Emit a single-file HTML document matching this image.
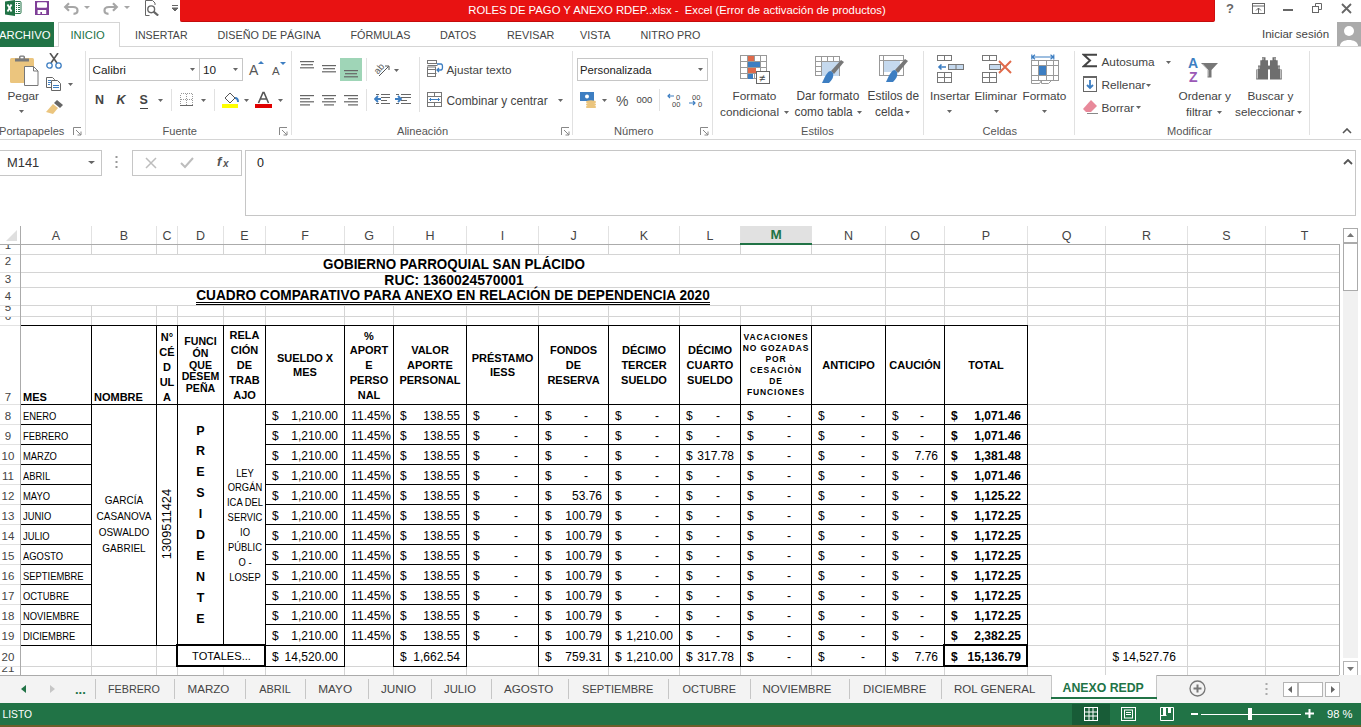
<!DOCTYPE html><html><head><meta charset="utf-8"><style>
html,body{margin:0;padding:0;} body{width:1361px;height:727px;overflow:hidden;position:relative;background:#fff;font-family:"Liberation Sans", sans-serif;} div{box-sizing:border-box;} svg{display:block;}
</style></head><body>
<div style="position:absolute;left:180px;top:0px;width:1035px;height:22px;background:#e81212;border-radius:0 0 2px 2px;border-bottom:1px solid #c40c0c;border-right:1px solid #d00e0e;"></div>
<div style="position:absolute;left:327.0px;top:-0.1999999999999993px;width:700px;text-align:center;line-height:20px;height:20px;font-size:11.3px;color:#fff;font-weight:normal;white-space:pre;">ROLES DE PAGO Y ANEXO RDEP..xlsx -  Excel (Error de activación de productos)</div>
<svg style="position:absolute;left:5px;top:0px;" width="17" height="16" viewBox="0 0 17 16"><rect x="9.5" y="1.5" width="6.5" height="12" rx="1" fill="#fff" stroke="#217346"/><path d="M11 3.5h1M13 3.5h2M11 5.5h1M13 5.5h2M11 7.5h1M13 7.5h2M11 9.5h1M13 9.5h2M11 11.5h1M13 11.5h2" stroke="#217346"/><path d="M0 1.5L10 0v16L0 14.5z" fill="#217346"/><path d="M2.5 4.5l4 7M6.5 4.5l-4 7" stroke="#fff" stroke-width="1.8"/></svg>
<svg style="position:absolute;left:35px;top:1px;" width="14" height="14" viewBox="0 0 14 14"><rect x="0" y="0" width="14" height="14" fill="#7f3f98"/><rect x="2" y="1.3" width="10" height="5.5" rx="1" fill="#fff"/><rect x="2.6" y="9" width="8.6" height="4" fill="#fff"/><rect x="5.4" y="11" width="1.6" height="2" fill="#7f3f98"/></svg>
<svg style="position:absolute;left:63px;top:1px;" width="16" height="14" viewBox="0 0 16 14"><path d="M2.5 6H10C13.2 6 14.5 7.8 14.5 9.5C14.5 11.5 13 12.8 10.5 12.8" fill="none" stroke="#a6a6a6" stroke-width="2.2"/><path d="M6 2.2L2.2 6 6 9.8" fill="none" stroke="#a6a6a6" stroke-width="2.2"/></svg>
<svg style="position:absolute;left:84px;top:6px;" width="6" height="3" viewBox="0 0 6 3"><path d="M0 0h6l-3 3z" fill="#a6a6a6"/></svg>
<svg style="position:absolute;left:103px;top:1px;" width="16" height="14" viewBox="0 0 16 14"><path d="M13.5 6H6C2.8 6 1.5 7.8 1.5 9.5C1.5 11.5 3 12.8 5.5 12.8" fill="none" stroke="#a6a6a6" stroke-width="2.2"/><path d="M10 2.2L13.8 6 10 9.8" fill="none" stroke="#a6a6a6" stroke-width="2.2"/></svg>
<svg style="position:absolute;left:124px;top:6px;" width="6" height="3" viewBox="0 0 6 3"><path d="M0 0h6l-3 3z" fill="#a6a6a6"/></svg>
<svg style="position:absolute;left:145px;top:0px;" width="15" height="16" viewBox="0 0 15 16"><path d="M0.5 15.5V0.5h7l2.5 2.5v2" fill="none" stroke="#666"/><circle cx="6.2" cy="9.3" r="3.4" fill="#fff" stroke="#666" stroke-width="1.4"/><path d="M8.6 11.7l4.6 3.8" stroke="#666" stroke-width="2.2"/><path d="M0.5 15.5h4" stroke="#666"/></svg>
<svg style="position:absolute;left:172px;top:5px;" width="6" height="7" viewBox="0 0 6 7"><path d="M0 0.5h6M0 3h6l-3 3z" stroke="#666" fill="#666" stroke-width="1"/></svg>
<div style="position:absolute;left:1226px;top:-1.5px;line-height:20px;height:20px;font-size:13px;color:#666;font-weight:bold;white-space:pre;">?</div>
<svg style="position:absolute;left:1252px;top:3px;" width="13" height="11" viewBox="0 0 13 11"><rect x="0.5" y="0.5" width="12" height="10" fill="none" stroke="#666"/><path d="M0.5 3h12" stroke="#666"/><path d="M6.5 10V5M4 7.5l2.5-2.5 2.5 2.5" fill="none" stroke="#666"/></svg>
<svg style="position:absolute;left:1283px;top:9px;" width="10" height="2" viewBox="0 0 10 2"><rect width="10" height="2" fill="#666"/></svg>
<svg style="position:absolute;left:1312px;top:3px;" width="10" height="10" viewBox="0 0 10 10"><rect x="0.5" y="3.5" width="6" height="6" fill="none" stroke="#666"/><path d="M3.5 3.5V0.5h6v6h-3" fill="none" stroke="#666"/></svg>
<svg style="position:absolute;left:1341px;top:3px;" width="11" height="11" viewBox="0 0 11 11"><path d="M1 1l9 9M10 1l-9 9" stroke="#666" stroke-width="1.8"/></svg>
<div style="position:absolute;left:0px;top:46px;width:1361px;height:1px;background:#d5d5d5;"></div>
<div style="position:absolute;left:0px;top:22px;width:54px;height:25px;background:#217346;"></div>
<div style="position:absolute;left:-1px;top:24.5px;line-height:20px;height:20px;font-size:11.3px;color:#fff;font-weight:normal;white-space:pre;">ARCHIVO</div>
<div style="position:absolute;left:58px;top:22px;width:62px;height:25px;background:#fff;border:1px solid #d5d5d5;border-bottom:none;"></div>
<div style="position:absolute;left:70.5px;top:24.5px;line-height:20px;height:20px;font-size:11.2px;color:#217346;font-weight:normal;white-space:pre;">INICIO</div>
<div style="position:absolute;left:135px;top:24.5px;line-height:20px;height:20px;font-size:10.6px;color:#444;font-weight:normal;white-space:pre;">INSERTAR</div>
<div style="position:absolute;left:217.5px;top:24.5px;line-height:20px;height:20px;font-size:10.8px;color:#444;font-weight:normal;white-space:pre;">DISEÑO DE PÁGINA</div>
<div style="position:absolute;left:350.5px;top:24.5px;line-height:20px;height:20px;font-size:10.8px;color:#444;font-weight:normal;white-space:pre;">FÓRMULAS</div>
<div style="position:absolute;left:440px;top:24.5px;line-height:20px;height:20px;font-size:10.8px;color:#444;font-weight:normal;white-space:pre;">DATOS</div>
<div style="position:absolute;left:507px;top:24.5px;line-height:20px;height:20px;font-size:10.8px;color:#444;font-weight:normal;white-space:pre;">REVISAR</div>
<div style="position:absolute;left:580px;top:24.5px;line-height:20px;height:20px;font-size:10.8px;color:#444;font-weight:normal;white-space:pre;">VISTA</div>
<div style="position:absolute;left:640.5px;top:24.5px;line-height:20px;height:20px;font-size:10.8px;color:#444;font-weight:normal;white-space:pre;">NITRO PRO</div>
<div style="position:absolute;left:1262px;top:23.5px;line-height:20px;height:20px;font-size:11.5px;color:#444;font-weight:normal;white-space:pre;">Iniciar sesión</div>
<div style="position:absolute;left:1337px;top:22px;width:24px;height:24px;background:#ababab;"></div>
<svg style="position:absolute;left:1337px;top:22px;" width="24" height="24" viewBox="0 0 24 24"><circle cx="12" cy="9" r="5" fill="#fff"/><path d="M3 24 C3 16, 21 16, 21 24z" fill="#fff"/></svg>
<div style="position:absolute;left:0px;top:139px;width:1361px;height:1px;background:#d5d5d5;"></div>
<div style="position:absolute;left:85px;top:51px;width:1px;height:84px;background:#e1e1e1;"></div>
<div style="position:absolute;left:291px;top:51px;width:1px;height:84px;background:#e1e1e1;"></div>
<div style="position:absolute;left:572px;top:51px;width:1px;height:84px;background:#e1e1e1;"></div>
<div style="position:absolute;left:712px;top:51px;width:1px;height:84px;background:#e1e1e1;"></div>
<div style="position:absolute;left:923px;top:51px;width:1px;height:84px;background:#e1e1e1;"></div>
<div style="position:absolute;left:1074px;top:51px;width:1px;height:84px;background:#e1e1e1;"></div>
<div style="position:absolute;left:1309px;top:51px;width:1px;height:84px;background:#e1e1e1;"></div>
<div style="position:absolute;left:-1px;top:120.5px;line-height:20px;height:20px;font-size:11.1px;color:#555;font-weight:normal;white-space:pre;">Portapapeles</div>
<div style="position:absolute;left:162.5px;top:120.5px;line-height:20px;height:20px;font-size:11.1px;color:#555;font-weight:normal;white-space:pre;">Fuente</div>
<div style="position:absolute;left:397px;top:120.5px;line-height:20px;height:20px;font-size:11.1px;color:#555;font-weight:normal;white-space:pre;">Alineación</div>
<div style="position:absolute;left:614px;top:120.5px;line-height:20px;height:20px;font-size:11.1px;color:#555;font-weight:normal;white-space:pre;">Número</div>
<div style="position:absolute;left:801px;top:120.5px;line-height:20px;height:20px;font-size:11.1px;color:#555;font-weight:normal;white-space:pre;">Estilos</div>
<div style="position:absolute;left:982.5px;top:120.5px;line-height:20px;height:20px;font-size:11.1px;color:#555;font-weight:normal;white-space:pre;">Celdas</div>
<div style="position:absolute;left:1167px;top:120.5px;line-height:20px;height:20px;font-size:11.1px;color:#555;font-weight:normal;white-space:pre;">Modificar</div>
<svg style="position:absolute;left:73px;top:127px;" width="9" height="9" viewBox="0 0 9 9"><path d="M0.5 8V0.5H8" fill="none" stroke="#888"/><path d="M3 3l5 5M8 4.5V8H4.5" fill="none" stroke="#888"/></svg>
<svg style="position:absolute;left:279px;top:127px;" width="9" height="9" viewBox="0 0 9 9"><path d="M0.5 8V0.5H8" fill="none" stroke="#888"/><path d="M3 3l5 5M8 4.5V8H4.5" fill="none" stroke="#888"/></svg>
<svg style="position:absolute;left:561px;top:127px;" width="9" height="9" viewBox="0 0 9 9"><path d="M0.5 8V0.5H8" fill="none" stroke="#888"/><path d="M3 3l5 5M8 4.5V8H4.5" fill="none" stroke="#888"/></svg>
<svg style="position:absolute;left:700px;top:127px;" width="9" height="9" viewBox="0 0 9 9"><path d="M0.5 8V0.5H8" fill="none" stroke="#888"/><path d="M3 3l5 5M8 4.5V8H4.5" fill="none" stroke="#888"/></svg>
<svg style="position:absolute;left:10px;top:55px;" width="29" height="31" viewBox="0 0 29 31"><rect x="0" y="3" width="24" height="25" rx="1.5" fill="#ebc57e"/><rect x="5" y="3.5" width="14" height="3" fill="#7a7a7a"/><rect x="9" y="0.5" width="6" height="4" rx="1.5" fill="#7a7a7a"/><rect x="10.5" y="1.8" width="3" height="1.5" fill="#fff"/><path d="M14.5 11.5h9l4.5 4.5v14.5h-13.5z" fill="#fff" stroke="#777"/><path d="M23.5 11.5v4.5h4.5" fill="none" stroke="#777"/></svg>
<div style="position:absolute;left:7.5px;top:86.0px;line-height:20px;height:20px;font-size:11.8px;color:#444;font-weight:normal;white-space:pre;">Pegar</div>
<svg style="position:absolute;left:19.0px;top:109.5px;" width="5" height="3" viewBox="0 0 5 3"><path d="M0 0h5l-2.5 3z" fill="#666"/></svg>
<svg style="position:absolute;left:46px;top:53px;" width="16" height="16" viewBox="0 0 16 16"><path d="M4 0l7 10M12 0l-7 10" stroke="#555" stroke-width="1.6"/><circle cx="3.5" cy="12.5" r="2.7" fill="none" stroke="#3d7ec2" stroke-width="1.3"/><circle cx="12.5" cy="12.5" r="2.7" fill="none" stroke="#3d7ec2" stroke-width="1.3"/></svg>
<svg style="position:absolute;left:46px;top:77px;" width="16" height="14" viewBox="0 0 16 14"><path d="M0.5 0.5h6l2 2v8h-8z" fill="#fff" stroke="#666"/><path d="M5.5 3.5h6l3 3v7h-9z" fill="#fff" stroke="#666"/><path d="M7 8.5h6M7 10.5h6M2 3.5h3M2 5.5h3M2 7.5h2" stroke="#3d7ec2"/></svg>
<svg style="position:absolute;left:68.0px;top:82.5px;" width="5" height="3" viewBox="0 0 5 3"><path d="M0 0h5l-2.5 3z" fill="#666"/></svg>
<svg style="position:absolute;left:46px;top:100px;" width="17" height="14" viewBox="0 0 17 14"><path d="M11 0l6 5-3 3-6-5z" fill="#666"/><path d="M7 4l5 4-5 6-7-2z" fill="#ebc57e"/></svg>
<div style="position:absolute;left:89px;top:58px;width:111px;height:23px;border:1px solid #c6c6c6;background:#fff;"></div>
<div style="position:absolute;left:92.5px;top:59.5px;line-height:20px;height:20px;font-size:11.8px;color:#222;font-weight:normal;white-space:pre;">Calibri</div>
<svg style="position:absolute;left:189.5px;top:68.0px;" width="5" height="3" viewBox="0 0 5 3"><path d="M0 0h5l-2.5 3z" fill="#666"/></svg>
<div style="position:absolute;left:199px;top:58px;width:44px;height:23px;border:1px solid #c6c6c6;background:#fff;"></div>
<div style="position:absolute;left:203px;top:59.5px;line-height:20px;height:20px;font-size:11.8px;color:#222;font-weight:normal;white-space:pre;">10</div>
<svg style="position:absolute;left:232.5px;top:68.0px;" width="5" height="3" viewBox="0 0 5 3"><path d="M0 0h5l-2.5 3z" fill="#666"/></svg>
<div style="position:absolute;left:249px;top:60.0px;line-height:20px;height:20px;font-size:14px;color:#555;font-weight:normal;white-space:pre;">A</div>
<svg style="position:absolute;left:258px;top:61px;" width="6" height="3" viewBox="0 0 6 3"><path d="M0 3h6l-3-3z" fill="#3d7ec2"/></svg>
<div style="position:absolute;left:272px;top:61.0px;line-height:20px;height:20px;font-size:11.5px;color:#555;font-weight:normal;white-space:pre;">A</div>
<svg style="position:absolute;left:280px;top:62px;" width="6" height="3" viewBox="0 0 6 3"><path d="M0 0h6l-3 3z" fill="#3d7ec2"/></svg>
<div style="position:absolute;left:95px;top:90.0px;line-height:20px;height:20px;font-size:12.5px;color:#444;font-weight:bold;white-space:pre;">N</div>
<div style="position:absolute;left:116.5px;top:90.0px;line-height:20px;height:20px;font-size:12.5px;color:#444;font-weight:bold;white-space:pre;font-style:italic;">K</div>
<div style="position:absolute;left:139.5px;top:90.0px;line-height:20px;height:20px;font-size:12.5px;color:#444;font-weight:bold;white-space:pre;">S</div>
<div style="position:absolute;left:140px;top:108px;width:8px;height:1px;background:#444;"></div>
<svg style="position:absolute;left:157.5px;top:98.5px;" width="5" height="3" viewBox="0 0 5 3"><path d="M0 0h5l-2.5 3z" fill="#666"/></svg>
<div style="position:absolute;left:171px;top:89px;width:1px;height:22px;background:#e1e1e1;"></div>
<svg style="position:absolute;left:180px;top:93px;" width="13" height="13" viewBox="0 0 13 13"><path d="M0.5 0.5h12v12h-12zM6.5 0.5v12M0.5 6.5h12" fill="none" stroke="#999" stroke-dasharray="1 1" shape-rendering="crispEdges"/><path d="M0 12.5h13" stroke="#666" shape-rendering="crispEdges"/></svg>
<svg style="position:absolute;left:200.5px;top:98.5px;" width="5" height="3" viewBox="0 0 5 3"><path d="M0 0h5l-2.5 3z" fill="#666"/></svg>
<div style="position:absolute;left:214px;top:89px;width:1px;height:22px;background:#e1e1e1;"></div>
<svg style="position:absolute;left:222px;top:92px;" width="17" height="16" viewBox="0 0 17 16"><path d="M3 6l5-5 5 5-5 5z" fill="#fff" stroke="#555"/><path d="M13 6c2 0 3 2 3 4" stroke="#3d7ec2" stroke-width="2" fill="none"/><rect x="0" y="12" width="16" height="4" fill="#ffff00"/></svg>
<svg style="position:absolute;left:243.5px;top:98.5px;" width="5" height="3" viewBox="0 0 5 3"><path d="M0 0h5l-2.5 3z" fill="#666"/></svg>
<svg style="position:absolute;left:255px;top:91px;" width="17" height="17" viewBox="0 0 17 17"><path d="M3.5 12L8 1.5h1l4.5 10.5M5.2 8h6.6" fill="none" stroke="#555" stroke-width="1.6"/><rect x="0" y="13" width="17" height="4" fill="#e00000"/></svg>
<svg style="position:absolute;left:277.5px;top:98.5px;" width="5" height="3" viewBox="0 0 5 3"><path d="M0 0h5l-2.5 3z" fill="#666"/></svg>
<svg style="position:absolute;left:300px;top:61px;" width="15" height="11" viewBox="0 0 15 11"><rect x="0" y="0.0" width="14" height="1.2" fill="#666"/><rect x="1" y="3.1" width="12" height="1.2" fill="#666"/><rect x="0" y="6.2" width="14" height="1.2" fill="#666"/></svg>
<svg style="position:absolute;left:322px;top:65px;" width="15" height="11" viewBox="0 0 15 11"><rect x="0" y="0.0" width="14" height="1.2" fill="#666"/><rect x="1" y="3.1" width="12" height="1.2" fill="#666"/><rect x="0" y="6.2" width="14" height="1.2" fill="#666"/></svg>
<div style="position:absolute;left:340px;top:58px;width:22px;height:23px;background:#9fd5b7;"></div>
<svg style="position:absolute;left:344px;top:70px;" width="15" height="11" viewBox="0 0 15 11"><rect x="0" y="0.0" width="14" height="1.2" fill="#666"/><rect x="1" y="3.1" width="12" height="1.2" fill="#666"/><rect x="0" y="6.2" width="14" height="1.2" fill="#666"/></svg>
<div style="position:absolute;left:366px;top:58px;width:1px;height:23px;background:#e1e1e1;"></div>
<svg style="position:absolute;left:373px;top:60px;" width="18" height="17" viewBox="0 0 18 17"><text x="1" y="12" font-size="9.5" font-family="Liberation Sans" fill="#555" transform="rotate(-50 6 9)">ab</text><path d="M6 16L15.5 6.5M12 6h4v4" stroke="#555" fill="none"/></svg>
<svg style="position:absolute;left:393.5px;top:68.5px;" width="5" height="3" viewBox="0 0 5 3"><path d="M0 0h5l-2.5 3z" fill="#666"/></svg>
<div style="position:absolute;left:419px;top:57px;width:1px;height:55px;background:#e1e1e1;"></div>
<svg style="position:absolute;left:427px;top:60px;" width="17" height="17" viewBox="0 0 17 17"><rect x="0.5" y="0.5" width="9" height="3" fill="none" stroke="#777"/><path d="M0.5 5.5h10M0.5 9.5h8M0.5 13.5h9" stroke="#777"/><rect x="0.5" y="7" width="8" height="9.5" fill="none" stroke="#777"/><path d="M10 4h4c2 0 2 6 0 6h-4M12 8l-2 2 2 2" fill="none" stroke="#3d7ec2" stroke-width="1.3"/></svg>
<div style="position:absolute;left:446.5px;top:60.0px;line-height:20px;height:20px;font-size:11.7px;color:#444;font-weight:normal;white-space:pre;">Ajustar texto</div>
<svg style="position:absolute;left:300px;top:95px;" width="15" height="14" viewBox="0 0 15 14"><rect x="0" y="0.0" width="14" height="1.2" fill="#666"/><rect x="0" y="3.1" width="10" height="1.2" fill="#666"/><rect x="0" y="6.2" width="14" height="1.2" fill="#666"/><rect x="0" y="9.3" width="10" height="1.2" fill="#666"/></svg>
<svg style="position:absolute;left:322px;top:95px;" width="15" height="14" viewBox="0 0 15 14"><rect x="0" y="0.0" width="14" height="1.2" fill="#666"/><rect x="2" y="3.1" width="10" height="1.2" fill="#666"/><rect x="0" y="6.2" width="14" height="1.2" fill="#666"/><rect x="2" y="9.3" width="10" height="1.2" fill="#666"/></svg>
<svg style="position:absolute;left:344px;top:95px;" width="15" height="14" viewBox="0 0 15 14"><rect x="0" y="0.0" width="14" height="1.2" fill="#666"/><rect x="4" y="3.1" width="10" height="1.2" fill="#666"/><rect x="0" y="6.2" width="14" height="1.2" fill="#666"/><rect x="4" y="9.3" width="10" height="1.2" fill="#666"/></svg>
<div style="position:absolute;left:366px;top:89px;width:1px;height:22px;background:#e1e1e1;"></div>
<svg style="position:absolute;left:374px;top:94px;" width="17" height="12" viewBox="0 0 17 12"><path d="M2 0.5h3M7 0.5h9M7 3.5h9M7 6.5h6M2 9.5h3M7 9.5h9" stroke="#666"/><path d="M1 5h6M4 2L1 5l3 3" stroke="#3d7ec2" stroke-width="1.8" fill="none"/></svg>
<svg style="position:absolute;left:395px;top:94px;" width="17" height="12" viewBox="0 0 17 12"><path d="M1 0.5h3M6 0.5h10M6 3.5h10M6 6.5h6M1 9.5h3M6 9.5h10" stroke="#666"/><path d="M0 5h6M3 2l3 3-3 3" stroke="#3d7ec2" stroke-width="1.8" fill="none"/></svg>
<svg style="position:absolute;left:427px;top:92px;" width="15" height="15" viewBox="0 0 15 15"><rect x="0.5" y="0.5" width="14" height="14" fill="none" stroke="#777"/><path d="M0.5 4.5h14M0.5 10.5h14M7.5 0.5v4M7.5 10.5v4" stroke="#777"/><path d="M2.5 7.5h10M4 6l-1.5 1.5 1.5 1.5M11 6l1.5 1.5-1.5 1.5" stroke="#3d7ec2" fill="none"/></svg>
<div style="position:absolute;left:446.5px;top:90.5px;line-height:20px;height:20px;font-size:11.9px;color:#444;font-weight:normal;white-space:pre;">Combinar y centrar</div>
<svg style="position:absolute;left:558.0px;top:98.5px;" width="5" height="3" viewBox="0 0 5 3"><path d="M0 0h5l-2.5 3z" fill="#666"/></svg>
<div style="position:absolute;left:577px;top:58px;width:131px;height:23px;border:1px solid #c6c6c6;background:#fff;"></div>
<div style="position:absolute;left:580px;top:59.5px;line-height:20px;height:20px;font-size:11.3px;color:#222;font-weight:normal;white-space:pre;">Personalizada</div>
<svg style="position:absolute;left:697.5px;top:68.0px;" width="5" height="3" viewBox="0 0 5 3"><path d="M0 0h5l-2.5 3z" fill="#666"/></svg>
<svg style="position:absolute;left:580px;top:92px;" width="17" height="16" viewBox="0 0 17 16"><rect x="0" y="0" width="14" height="9" fill="#3d7ec2"/><circle cx="7" cy="4.5" r="2" fill="#fff"/><ellipse cx="11" cy="10" rx="5" ry="1.8" fill="#ebc57e"/><ellipse cx="11" cy="12.5" rx="5" ry="1.8" fill="#ebc57e"/><ellipse cx="11" cy="15" rx="5" ry="1.8" fill="#ebc57e"/></svg>
<svg style="position:absolute;left:601.5px;top:98.5px;" width="5" height="3" viewBox="0 0 5 3"><path d="M0 0h5l-2.5 3z" fill="#666"/></svg>
<div style="position:absolute;left:616px;top:90.5px;line-height:20px;height:20px;font-size:14px;color:#555;font-weight:normal;white-space:pre;">%</div>
<div style="position:absolute;left:636.5px;top:89.5px;line-height:20px;height:20px;font-size:9.5px;color:#444;font-weight:normal;white-space:pre;">000</div>
<div style="position:absolute;left:659px;top:89px;width:1px;height:22px;background:#e1e1e1;"></div>
<svg style="position:absolute;left:667px;top:93px;" width="18" height="14" viewBox="0 0 18 14"><path d="M1 3h6M3 1L1 3l2 2" stroke="#3d7ec2" fill="none" stroke-width="1.2"/><text x="9" y="6.5" font-size="7.5" font-family="Liberation Sans" fill="#444">0</text><text x="5" y="13.5" font-size="7.5" font-family="Liberation Sans" fill="#444">00</text></svg>
<svg style="position:absolute;left:689px;top:93px;" width="16" height="14" viewBox="0 0 16 14"><text x="3" y="6.5" font-size="7.5" font-family="Liberation Sans" fill="#444">00</text><path d="M0 10h6M4 8l2 2-2 2" stroke="#3d7ec2" fill="none" stroke-width="1.2"/><text x="9" y="13.5" font-size="7.5" font-family="Liberation Sans" fill="#444">0</text></svg>
<svg style="position:absolute;left:740px;top:55px;" width="31" height="30" viewBox="0 0 31 30"><g stroke="#999" fill="none"><rect x="0.5" y="0.5" width="26" height="23"/><path d="M0.5 6.5h26M0.5 12.5h26M0.5 18.5h26M7.5 0.5v23M14.5 0.5v23M20.5 0.5v23"/></g><rect x="8" y="1" width="6" height="5" fill="#e06a4a"/><rect x="8" y="7" width="12" height="5" fill="#3d7ec2"/><rect x="8" y="13" width="8" height="5" fill="#e06a4a"/><rect x="8" y="19" width="5" height="5" fill="#3d7ec2"/><rect x="16.5" y="16.5" width="13" height="12" fill="#fff" stroke="#666"/><text x="19" y="27" font-size="11" font-family="Liberation Sans" fill="#444">≠</text></svg>
<div style="position:absolute;left:732.5px;top:86.0px;line-height:20px;height:20px;font-size:11.8px;color:#444;font-weight:normal;white-space:pre;">Formato</div>
<div style="position:absolute;left:720px;top:102.0px;line-height:20px;height:20px;font-size:11.8px;color:#444;font-weight:normal;white-space:pre;">condicional</div>
<svg style="position:absolute;left:783.5px;top:110.5px;" width="5" height="3" viewBox="0 0 5 3"><path d="M0 0h5l-2.5 3z" fill="#666"/></svg>
<svg style="position:absolute;left:815px;top:56px;" width="30" height="28" viewBox="0 0 30 28"><g stroke="#999" fill="none"><rect x="0.5" y="0.5" width="24" height="19"/><path d="M0.5 5.5h24M0.5 10.5h24M0.5 15.5h24M6.5 0.5v19M12.5 0.5v19M18.5 0.5v19"/></g><rect x="7" y="6" width="17" height="14" fill="#c5d9ee"/><path d="M29 6l-10 12-3-3 10-11z" fill="#777"/><path d="M16 15c-3 0-5 3-9 12h7c3-3 5-6 4-10z" fill="#3d7ec2"/></svg>
<div style="position:absolute;left:796.5px;top:86.0px;line-height:20px;height:20px;font-size:11.9px;color:#444;font-weight:normal;white-space:pre;">Dar formato</div>
<div style="position:absolute;left:794.5px;top:102.0px;line-height:20px;height:20px;font-size:11.9px;color:#444;font-weight:normal;white-space:pre;">como tabla</div>
<svg style="position:absolute;left:856.5px;top:110.5px;" width="5" height="3" viewBox="0 0 5 3"><path d="M0 0h5l-2.5 3z" fill="#666"/></svg>
<svg style="position:absolute;left:879px;top:55px;" width="30" height="28" viewBox="0 0 30 28"><g stroke="#999" fill="none"><rect x="0.5" y="0.5" width="24" height="20"/><path d="M0.5 5.5h24M4.5 0.5v20"/></g><rect x="5" y="6" width="16" height="11" fill="#c5d9ee"/><path d="M29 6l-10 12-3-3 10-11z" fill="#777"/><path d="M16 15c-3 0-5 3-9 12h7c3-3 5-6 4-10z" fill="#3d7ec2"/></svg>
<div style="position:absolute;left:867.5px;top:86.0px;line-height:20px;height:20px;font-size:11.9px;color:#444;font-weight:normal;white-space:pre;">Estilos de</div>
<div style="position:absolute;left:875px;top:102.0px;line-height:20px;height:20px;font-size:11.9px;color:#444;font-weight:normal;white-space:pre;">celda</div>
<svg style="position:absolute;left:904.5px;top:110.5px;" width="5" height="3" viewBox="0 0 5 3"><path d="M0 0h5l-2.5 3z" fill="#666"/></svg>
<svg style="position:absolute;left:937px;top:55px;" width="27" height="28" viewBox="0 0 27 28"><g stroke="#777" fill="none"><rect x="0.5" y="0.5" width="14" height="5"/><path d="M7.5 0.5v5"/><rect x="0.5" y="17.5" width="14" height="10"/><path d="M0.5 22.5h14M7.5 17.5v10"/><rect x="11.5" y="9.5" width="15" height="5" fill="#c5d9ee"/><path d="M19 9.5v5"/></g><path d="M2 12h7M4.5 9.5L2 12l2.5 2.5" stroke="#3d7ec2" stroke-width="1.6" fill="none"/></svg>
<div style="position:absolute;left:930px;top:86.0px;line-height:20px;height:20px;font-size:11.8px;color:#444;font-weight:normal;white-space:pre;">Insertar</div>
<svg style="position:absolute;left:946.5px;top:109.5px;" width="5" height="3" viewBox="0 0 5 3"><path d="M0 0h5l-2.5 3z" fill="#666"/></svg>
<svg style="position:absolute;left:982px;top:55px;" width="30" height="28" viewBox="0 0 30 28"><g stroke="#777" fill="none"><rect x="0.5" y="0.5" width="14" height="5"/><path d="M7.5 0.5v5"/><rect x="0.5" y="17.5" width="14" height="10"/><path d="M0.5 22.5h14M7.5 17.5v10"/><rect x="7.5" y="9.5" width="11" height="5" fill="#c5d9ee"/></g><path d="M17 6l12 12M29 6L17 18" stroke="#e06a4a" stroke-width="2"/></svg>
<div style="position:absolute;left:974.5px;top:86.0px;line-height:20px;height:20px;font-size:11.8px;color:#444;font-weight:normal;white-space:pre;">Eliminar</div>
<svg style="position:absolute;left:993.5px;top:109.5px;" width="5" height="3" viewBox="0 0 5 3"><path d="M0 0h5l-2.5 3z" fill="#666"/></svg>
<svg style="position:absolute;left:1031px;top:53px;" width="29" height="33" viewBox="0 0 29 33"><path d="M0.8 1.5v5M22.8 1.5v5M1 4h21.5M4 1.8L1.2 4 4 6.2M19.5 1.8L22.3 4 19.5 6.2" stroke="#3d7ec2" stroke-width="1.2" fill="none"/><g stroke="#999" fill="none"><rect x="0.5" y="7.5" width="27" height="20"/><path d="M7.5 7.5v20M15.5 7.5v20M22.5 7.5v20M0.5 12.5h27M0.5 22.5h27M0.5 27.5v3h8l2-3M10.5 27.5v3h7l3-3"/></g><rect x="8" y="13" width="7" height="9" fill="#3d7ec2"/></svg>
<div style="position:absolute;left:1022.5px;top:86.0px;line-height:20px;height:20px;font-size:11.8px;color:#444;font-weight:normal;white-space:pre;">Formato</div>
<svg style="position:absolute;left:1041.5px;top:109.5px;" width="5" height="3" viewBox="0 0 5 3"><path d="M0 0h5l-2.5 3z" fill="#666"/></svg>
<svg style="position:absolute;left:1082px;top:53px;" width="16" height="15" viewBox="0 0 16 15"><path d="M15 1.8H1.8L8 7.5 1.8 13.2H15" fill="none" stroke="#444" stroke-width="2" stroke-linejoin="miter"/></svg>
<div style="position:absolute;left:1101.5px;top:52.0px;line-height:20px;height:20px;font-size:11.8px;color:#444;font-weight:normal;white-space:pre;">Autosuma</div>
<svg style="position:absolute;left:1165.5px;top:60.5px;" width="5" height="3" viewBox="0 0 5 3"><path d="M0 0h5l-2.5 3z" fill="#666"/></svg>
<svg style="position:absolute;left:1083px;top:76px;" width="15" height="16" viewBox="0 0 15 16"><rect x="0.5" y="0.5" width="13" height="15" fill="#fff" stroke="#666"/><rect x="0" y="0" width="14" height="2" fill="#666"/><path d="M7 4v8M4 9l3 3 3-3" stroke="#3d7ec2" stroke-width="1.8" fill="none"/></svg>
<div style="position:absolute;left:1101.5px;top:75.0px;line-height:20px;height:20px;font-size:11.8px;color:#444;font-weight:normal;white-space:pre;">Rellenar</div>
<svg style="position:absolute;left:1145.5px;top:83.5px;" width="5" height="3" viewBox="0 0 5 3"><path d="M0 0h5l-2.5 3z" fill="#666"/></svg>
<svg style="position:absolute;left:1083px;top:100px;" width="15" height="14" viewBox="0 0 15 14"><path d="M8 0l6 6-6 6H3l-3-3z" fill="#e8899a"/><path d="M4 13.5h11" stroke="#888"/></svg>
<div style="position:absolute;left:1101.5px;top:97.5px;line-height:20px;height:20px;font-size:11.8px;color:#444;font-weight:normal;white-space:pre;">Borrar</div>
<svg style="position:absolute;left:1135.5px;top:106.0px;" width="5" height="3" viewBox="0 0 5 3"><path d="M0 0h5l-2.5 3z" fill="#666"/></svg>
<svg style="position:absolute;left:1188px;top:55px;" width="31" height="28" viewBox="0 0 31 28"><text x="0" y="12.5" font-size="14" font-weight="bold" font-family="Liberation Sans" fill="#3d7ec2">A</text><text x="1" y="27" font-size="14" font-weight="bold" font-family="Liberation Sans" fill="#9b59b6">Z</text><path d="M13 8h17l-6.5 7v7.5h-4v-7.5z" fill="#777"/><path d="M14.5 9l5.5 6v6.5" stroke="#fff" stroke-width="0.7" fill="none"/></svg>
<div style="position:absolute;left:1178.5px;top:86.0px;line-height:20px;height:20px;font-size:11.8px;color:#444;font-weight:normal;white-space:pre;">Ordenar y</div>
<div style="position:absolute;left:1186px;top:102.0px;line-height:20px;height:20px;font-size:11.8px;color:#444;font-weight:normal;white-space:pre;">filtrar</div>
<svg style="position:absolute;left:1216.5px;top:110.5px;" width="5" height="3" viewBox="0 0 5 3"><path d="M0 0h5l-2.5 3z" fill="#666"/></svg>
<svg style="position:absolute;left:1256px;top:57px;" width="26" height="23" viewBox="0 0 26 23"><path d="M6 0.3H9.5V3.3H12V22.6H0.2V12.4H2V8.6H4.3V3.3H6Z" fill="#6e6e6e"/><path d="M20 0.3H16.5V3.3H14V22.6H25.8V12.4H24V8.6H21.7V3.3H20Z" fill="#6e6e6e"/><rect x="12" y="8.6" width="2" height="3.8" fill="#6e6e6e"/><path d="M1.3 13v8.5M24.7 13v8.5M7 1v2M19 1v2M3 9.5v2.5M23 9.5v2.5" stroke="#fff" stroke-width="0.7"/></svg>
<div style="position:absolute;left:1247.5px;top:86.0px;line-height:20px;height:20px;font-size:11.8px;color:#444;font-weight:normal;white-space:pre;">Buscar y</div>
<div style="position:absolute;left:1235px;top:102.0px;line-height:20px;height:20px;font-size:11.8px;color:#444;font-weight:normal;white-space:pre;">seleccionar</div>
<svg style="position:absolute;left:1296.5px;top:110.5px;" width="5" height="3" viewBox="0 0 5 3"><path d="M0 0h5l-2.5 3z" fill="#666"/></svg>
<svg style="position:absolute;left:1342px;top:128px;" width="10" height="6" viewBox="0 0 10 6"><path d="M1 5l4-4 4 4" stroke="#555" stroke-width="1.6" fill="none"/></svg>
<div style="position:absolute;left:-1px;top:150px;width:103px;height:26px;border:1px solid #c6c6c6;background:#fff;"></div>
<div style="position:absolute;left:7px;top:152.5px;line-height:20px;height:20px;font-size:12.9px;color:#333;font-weight:normal;white-space:pre;">M141</div>
<svg style="position:absolute;left:87.5px;top:160.5px;" width="7" height="3" viewBox="0 0 7 3"><path d="M0 0h7l-3.5 3z" fill="#666"/></svg>
<svg style="position:absolute;left:115px;top:156px;" width="3" height="13" viewBox="0 0 3 13"><rect x="0.5" y="0" width="2" height="2" fill="#999"/><rect x="0.5" y="5" width="2" height="2" fill="#999"/><rect x="0.5" y="10" width="2" height="2" fill="#999"/></svg>
<div style="position:absolute;left:132px;top:150px;width:110px;height:26px;border:1px solid #c6c6c6;background:#fff;"></div>
<svg style="position:absolute;left:145px;top:157px;" width="12" height="12" viewBox="0 0 12 12"><path d="M1 1l10 10M11 1L1 11" stroke="#bdbdbd" stroke-width="1.5"/></svg>
<svg style="position:absolute;left:180px;top:157px;" width="14" height="12" viewBox="0 0 14 12"><path d="M1 6l4 4 8-9" stroke="#bdbdbd" stroke-width="2" fill="none"/></svg>
<div style="position:absolute;left:217px;top:152.0px;line-height:20px;height:20px;font-size:13px;color:#555;font-weight:bold;white-space:pre;font-style:italic;font-family:"Liberation Serif";">f</div>
<div style="position:absolute;left:223px;top:154.0px;line-height:20px;height:20px;font-size:10px;color:#555;font-weight:bold;white-space:pre;font-style:italic;font-family:"Liberation Serif";">x</div>
<div style="position:absolute;left:245px;top:150px;width:111px;height:66px;border:1px solid #c6c6c6;border-right:none;background:#fff;"></div>
<div style="position:absolute;left:245px;top:150px;width:1111px;height:66px;border:1px solid #c6c6c6;background:#fff;"></div>
<div style="position:absolute;left:257px;top:153.0px;line-height:20px;height:20px;font-size:12.5px;color:#222;font-weight:normal;white-space:pre;">0</div>
<svg style="position:absolute;left:1343px;top:159px;" width="10" height="6" viewBox="0 0 10 6"><path d="M1 5l4-4 4 4" stroke="#555" stroke-width="1.8" fill="none"/></svg>
<div style="position:absolute;left:740px;top:226px;width:72px;height:18px;background:#e1e1e1;border-left:1px solid #c6c6c6;border-right:1px solid #c6c6c6;"></div>
<svg style="position:absolute;left:0px;top:0px;shape-rendering:crispEdges;" width="1361" height="727" viewBox="0 0 1361 727"><rect x="20" y="254" width="1319" height="1" fill="#d4d4d4"/><rect x="20" y="272" width="1319" height="1" fill="#d4d4d4"/><rect x="20" y="287" width="1319" height="1" fill="#d4d4d4"/><rect x="20" y="305" width="1319" height="1" fill="#d4d4d4"/><rect x="20" y="316" width="1319" height="1" fill="#d4d4d4"/><rect x="20" y="325" width="1319" height="1" fill="#d4d4d4"/><rect x="20" y="404" width="1319" height="1" fill="#d4d4d4"/><rect x="20" y="424" width="1319" height="1" fill="#d4d4d4"/><rect x="20" y="444" width="1319" height="1" fill="#d4d4d4"/><rect x="20" y="464" width="1319" height="1" fill="#d4d4d4"/><rect x="20" y="484" width="1319" height="1" fill="#d4d4d4"/><rect x="20" y="504" width="1319" height="1" fill="#d4d4d4"/><rect x="20" y="524" width="1319" height="1" fill="#d4d4d4"/><rect x="20" y="544" width="1319" height="1" fill="#d4d4d4"/><rect x="20" y="564" width="1319" height="1" fill="#d4d4d4"/><rect x="20" y="584" width="1319" height="1" fill="#d4d4d4"/><rect x="20" y="604" width="1319" height="1" fill="#d4d4d4"/><rect x="20" y="624" width="1319" height="1" fill="#d4d4d4"/><rect x="20" y="645" width="1319" height="1" fill="#d4d4d4"/><rect x="20" y="666" width="1319" height="1" fill="#d4d4d4"/><rect x="91" y="244" width="1" height="10" fill="#d4d4d4"/><rect x="91" y="305" width="1" height="370" fill="#d4d4d4"/><rect x="156" y="244" width="1" height="10" fill="#d4d4d4"/><rect x="156" y="305" width="1" height="370" fill="#d4d4d4"/><rect x="177" y="244" width="1" height="10" fill="#d4d4d4"/><rect x="177" y="305" width="1" height="370" fill="#d4d4d4"/><rect x="223" y="244" width="1" height="10" fill="#d4d4d4"/><rect x="223" y="305" width="1" height="370" fill="#d4d4d4"/><rect x="265" y="244" width="1" height="10" fill="#d4d4d4"/><rect x="265" y="305" width="1" height="370" fill="#d4d4d4"/><rect x="344" y="244" width="1" height="10" fill="#d4d4d4"/><rect x="344" y="305" width="1" height="370" fill="#d4d4d4"/><rect x="393" y="244" width="1" height="10" fill="#d4d4d4"/><rect x="393" y="305" width="1" height="370" fill="#d4d4d4"/><rect x="466" y="244" width="1" height="10" fill="#d4d4d4"/><rect x="466" y="305" width="1" height="370" fill="#d4d4d4"/><rect x="538" y="244" width="1" height="10" fill="#d4d4d4"/><rect x="538" y="305" width="1" height="370" fill="#d4d4d4"/><rect x="608" y="244" width="1" height="10" fill="#d4d4d4"/><rect x="608" y="305" width="1" height="370" fill="#d4d4d4"/><rect x="679" y="244" width="1" height="10" fill="#d4d4d4"/><rect x="679" y="305" width="1" height="370" fill="#d4d4d4"/><rect x="740" y="244" width="1" height="10" fill="#d4d4d4"/><rect x="740" y="305" width="1" height="370" fill="#d4d4d4"/><rect x="811" y="244" width="1" height="10" fill="#d4d4d4"/><rect x="811" y="305" width="1" height="370" fill="#d4d4d4"/><rect x="885" y="244" width="1" height="10" fill="#d4d4d4"/><rect x="885" y="305" width="1" height="370" fill="#d4d4d4"/><rect x="885" y="254" width="1" height="51" fill="#d4d4d4"/><rect x="944" y="244" width="1" height="10" fill="#d4d4d4"/><rect x="944" y="305" width="1" height="370" fill="#d4d4d4"/><rect x="944" y="254" width="1" height="51" fill="#d4d4d4"/><rect x="1027" y="244" width="1" height="10" fill="#d4d4d4"/><rect x="1027" y="305" width="1" height="370" fill="#d4d4d4"/><rect x="1027" y="254" width="1" height="51" fill="#d4d4d4"/><rect x="1105" y="244" width="1" height="10" fill="#d4d4d4"/><rect x="1105" y="305" width="1" height="370" fill="#d4d4d4"/><rect x="1105" y="254" width="1" height="51" fill="#d4d4d4"/><rect x="1187" y="244" width="1" height="10" fill="#d4d4d4"/><rect x="1187" y="305" width="1" height="370" fill="#d4d4d4"/><rect x="1187" y="254" width="1" height="51" fill="#d4d4d4"/><rect x="1265" y="244" width="1" height="10" fill="#d4d4d4"/><rect x="1265" y="305" width="1" height="370" fill="#d4d4d4"/><rect x="1265" y="254" width="1" height="51" fill="#d4d4d4"/><rect x="91" y="226" width="1" height="18" fill="#e2e2e2"/><rect x="156" y="226" width="1" height="18" fill="#e2e2e2"/><rect x="177" y="226" width="1" height="18" fill="#e2e2e2"/><rect x="223" y="226" width="1" height="18" fill="#e2e2e2"/><rect x="265" y="226" width="1" height="18" fill="#e2e2e2"/><rect x="344" y="226" width="1" height="18" fill="#e2e2e2"/><rect x="393" y="226" width="1" height="18" fill="#e2e2e2"/><rect x="466" y="226" width="1" height="18" fill="#e2e2e2"/><rect x="538" y="226" width="1" height="18" fill="#e2e2e2"/><rect x="608" y="226" width="1" height="18" fill="#e2e2e2"/><rect x="679" y="226" width="1" height="18" fill="#e2e2e2"/><rect x="740" y="226" width="1" height="18" fill="#e2e2e2"/><rect x="811" y="226" width="1" height="18" fill="#e2e2e2"/><rect x="885" y="226" width="1" height="18" fill="#e2e2e2"/><rect x="944" y="226" width="1" height="18" fill="#e2e2e2"/><rect x="1027" y="226" width="1" height="18" fill="#e2e2e2"/><rect x="1105" y="226" width="1" height="18" fill="#e2e2e2"/><rect x="1187" y="226" width="1" height="18" fill="#e2e2e2"/><rect x="1265" y="226" width="1" height="18" fill="#e2e2e2"/><rect x="0" y="254" width="20" height="1" fill="#e2e2e2"/><rect x="0" y="272" width="20" height="1" fill="#e2e2e2"/><rect x="0" y="287" width="20" height="1" fill="#e2e2e2"/><rect x="0" y="305" width="20" height="1" fill="#e2e2e2"/><rect x="0" y="316" width="20" height="1" fill="#e2e2e2"/><rect x="0" y="325" width="20" height="1" fill="#e2e2e2"/><rect x="0" y="404" width="20" height="1" fill="#e2e2e2"/><rect x="0" y="424" width="20" height="1" fill="#e2e2e2"/><rect x="0" y="444" width="20" height="1" fill="#e2e2e2"/><rect x="0" y="464" width="20" height="1" fill="#e2e2e2"/><rect x="0" y="484" width="20" height="1" fill="#e2e2e2"/><rect x="0" y="504" width="20" height="1" fill="#e2e2e2"/><rect x="0" y="524" width="20" height="1" fill="#e2e2e2"/><rect x="0" y="544" width="20" height="1" fill="#e2e2e2"/><rect x="0" y="564" width="20" height="1" fill="#e2e2e2"/><rect x="0" y="584" width="20" height="1" fill="#e2e2e2"/><rect x="0" y="604" width="20" height="1" fill="#e2e2e2"/><rect x="0" y="624" width="20" height="1" fill="#e2e2e2"/><rect x="0" y="645" width="20" height="1" fill="#e2e2e2"/><rect x="0" y="666" width="20" height="1" fill="#e2e2e2"/><rect x="92" y="405" width="64" height="240" fill="#fff"/><rect x="157" y="405" width="20" height="240" fill="#fff"/><rect x="178" y="405" width="45" height="240" fill="#fff"/><rect x="224" y="405" width="41" height="240" fill="#fff"/><rect x="178" y="646" width="87" height="20" fill="#fff"/><rect x="20" y="325" width="72" height="1" fill="#000"/><rect x="20" y="404" width="72" height="1" fill="#000"/><rect x="20" y="325" width="1" height="80" fill="#000"/><rect x="91" y="325" width="1" height="80" fill="#000"/><rect x="91" y="325" width="66" height="1" fill="#000"/><rect x="91" y="404" width="66" height="1" fill="#000"/><rect x="91" y="325" width="1" height="80" fill="#000"/><rect x="156" y="325" width="1" height="80" fill="#000"/><rect x="156" y="325" width="22" height="1" fill="#000"/><rect x="156" y="404" width="22" height="1" fill="#000"/><rect x="156" y="325" width="1" height="80" fill="#000"/><rect x="177" y="325" width="1" height="80" fill="#000"/><rect x="177" y="325" width="47" height="1" fill="#000"/><rect x="177" y="404" width="47" height="1" fill="#000"/><rect x="177" y="325" width="1" height="80" fill="#000"/><rect x="223" y="325" width="1" height="80" fill="#000"/><rect x="223" y="325" width="43" height="1" fill="#000"/><rect x="223" y="404" width="43" height="1" fill="#000"/><rect x="223" y="325" width="1" height="80" fill="#000"/><rect x="265" y="325" width="1" height="80" fill="#000"/><rect x="265" y="325" width="80" height="1" fill="#000"/><rect x="265" y="404" width="80" height="1" fill="#000"/><rect x="265" y="325" width="1" height="80" fill="#000"/><rect x="344" y="325" width="1" height="80" fill="#000"/><rect x="344" y="325" width="50" height="1" fill="#000"/><rect x="344" y="404" width="50" height="1" fill="#000"/><rect x="344" y="325" width="1" height="80" fill="#000"/><rect x="393" y="325" width="1" height="80" fill="#000"/><rect x="393" y="325" width="74" height="1" fill="#000"/><rect x="393" y="404" width="74" height="1" fill="#000"/><rect x="393" y="325" width="1" height="80" fill="#000"/><rect x="466" y="325" width="1" height="80" fill="#000"/><rect x="466" y="325" width="73" height="1" fill="#000"/><rect x="466" y="404" width="73" height="1" fill="#000"/><rect x="466" y="325" width="1" height="80" fill="#000"/><rect x="538" y="325" width="1" height="80" fill="#000"/><rect x="538" y="325" width="71" height="1" fill="#000"/><rect x="538" y="404" width="71" height="1" fill="#000"/><rect x="538" y="325" width="1" height="80" fill="#000"/><rect x="608" y="325" width="1" height="80" fill="#000"/><rect x="608" y="325" width="72" height="1" fill="#000"/><rect x="608" y="404" width="72" height="1" fill="#000"/><rect x="608" y="325" width="1" height="80" fill="#000"/><rect x="679" y="325" width="1" height="80" fill="#000"/><rect x="679" y="325" width="62" height="1" fill="#000"/><rect x="679" y="404" width="62" height="1" fill="#000"/><rect x="679" y="325" width="1" height="80" fill="#000"/><rect x="740" y="325" width="1" height="80" fill="#000"/><rect x="740" y="325" width="72" height="1" fill="#000"/><rect x="740" y="404" width="72" height="1" fill="#000"/><rect x="740" y="325" width="1" height="80" fill="#000"/><rect x="811" y="325" width="1" height="80" fill="#000"/><rect x="811" y="325" width="75" height="1" fill="#000"/><rect x="811" y="404" width="75" height="1" fill="#000"/><rect x="811" y="325" width="1" height="80" fill="#000"/><rect x="885" y="325" width="1" height="80" fill="#000"/><rect x="885" y="325" width="60" height="1" fill="#000"/><rect x="885" y="404" width="60" height="1" fill="#000"/><rect x="885" y="325" width="1" height="80" fill="#000"/><rect x="944" y="325" width="1" height="80" fill="#000"/><rect x="944" y="325" width="84" height="1" fill="#000"/><rect x="944" y="404" width="84" height="1" fill="#000"/><rect x="944" y="325" width="1" height="80" fill="#000"/><rect x="1027" y="325" width="1" height="80" fill="#000"/><rect x="20" y="404" width="72" height="1" fill="#000"/><rect x="20" y="424" width="72" height="1" fill="#000"/><rect x="20" y="404" width="1" height="21" fill="#000"/><rect x="91" y="404" width="1" height="21" fill="#000"/><rect x="265" y="404" width="80" height="1" fill="#000"/><rect x="265" y="424" width="80" height="1" fill="#000"/><rect x="265" y="404" width="1" height="21" fill="#000"/><rect x="344" y="404" width="1" height="21" fill="#000"/><rect x="344" y="404" width="50" height="1" fill="#000"/><rect x="344" y="424" width="50" height="1" fill="#000"/><rect x="344" y="404" width="1" height="21" fill="#000"/><rect x="393" y="404" width="1" height="21" fill="#000"/><rect x="393" y="404" width="74" height="1" fill="#000"/><rect x="393" y="424" width="74" height="1" fill="#000"/><rect x="393" y="404" width="1" height="21" fill="#000"/><rect x="466" y="404" width="1" height="21" fill="#000"/><rect x="466" y="404" width="73" height="1" fill="#000"/><rect x="466" y="424" width="73" height="1" fill="#000"/><rect x="466" y="404" width="1" height="21" fill="#000"/><rect x="538" y="404" width="1" height="21" fill="#000"/><rect x="538" y="404" width="71" height="1" fill="#000"/><rect x="538" y="424" width="71" height="1" fill="#000"/><rect x="538" y="404" width="1" height="21" fill="#000"/><rect x="608" y="404" width="1" height="21" fill="#000"/><rect x="608" y="404" width="72" height="1" fill="#000"/><rect x="608" y="424" width="72" height="1" fill="#000"/><rect x="608" y="404" width="1" height="21" fill="#000"/><rect x="679" y="404" width="1" height="21" fill="#000"/><rect x="679" y="404" width="62" height="1" fill="#000"/><rect x="679" y="424" width="62" height="1" fill="#000"/><rect x="679" y="404" width="1" height="21" fill="#000"/><rect x="740" y="404" width="1" height="21" fill="#000"/><rect x="740" y="404" width="72" height="1" fill="#000"/><rect x="740" y="424" width="72" height="1" fill="#000"/><rect x="740" y="404" width="1" height="21" fill="#000"/><rect x="811" y="404" width="1" height="21" fill="#000"/><rect x="811" y="404" width="75" height="1" fill="#000"/><rect x="811" y="424" width="75" height="1" fill="#000"/><rect x="811" y="404" width="1" height="21" fill="#000"/><rect x="885" y="404" width="1" height="21" fill="#000"/><rect x="885" y="404" width="60" height="1" fill="#000"/><rect x="885" y="424" width="60" height="1" fill="#000"/><rect x="885" y="404" width="1" height="21" fill="#000"/><rect x="944" y="404" width="1" height="21" fill="#000"/><rect x="944" y="404" width="84" height="1" fill="#000"/><rect x="944" y="424" width="84" height="1" fill="#000"/><rect x="944" y="404" width="1" height="21" fill="#000"/><rect x="1027" y="404" width="1" height="21" fill="#000"/><rect x="20" y="424" width="72" height="1" fill="#000"/><rect x="20" y="444" width="72" height="1" fill="#000"/><rect x="20" y="424" width="1" height="21" fill="#000"/><rect x="91" y="424" width="1" height="21" fill="#000"/><rect x="265" y="424" width="80" height="1" fill="#000"/><rect x="265" y="444" width="80" height="1" fill="#000"/><rect x="265" y="424" width="1" height="21" fill="#000"/><rect x="344" y="424" width="1" height="21" fill="#000"/><rect x="344" y="424" width="50" height="1" fill="#000"/><rect x="344" y="444" width="50" height="1" fill="#000"/><rect x="344" y="424" width="1" height="21" fill="#000"/><rect x="393" y="424" width="1" height="21" fill="#000"/><rect x="393" y="424" width="74" height="1" fill="#000"/><rect x="393" y="444" width="74" height="1" fill="#000"/><rect x="393" y="424" width="1" height="21" fill="#000"/><rect x="466" y="424" width="1" height="21" fill="#000"/><rect x="466" y="424" width="73" height="1" fill="#000"/><rect x="466" y="444" width="73" height="1" fill="#000"/><rect x="466" y="424" width="1" height="21" fill="#000"/><rect x="538" y="424" width="1" height="21" fill="#000"/><rect x="538" y="424" width="71" height="1" fill="#000"/><rect x="538" y="444" width="71" height="1" fill="#000"/><rect x="538" y="424" width="1" height="21" fill="#000"/><rect x="608" y="424" width="1" height="21" fill="#000"/><rect x="608" y="424" width="72" height="1" fill="#000"/><rect x="608" y="444" width="72" height="1" fill="#000"/><rect x="608" y="424" width="1" height="21" fill="#000"/><rect x="679" y="424" width="1" height="21" fill="#000"/><rect x="679" y="424" width="62" height="1" fill="#000"/><rect x="679" y="444" width="62" height="1" fill="#000"/><rect x="679" y="424" width="1" height="21" fill="#000"/><rect x="740" y="424" width="1" height="21" fill="#000"/><rect x="740" y="424" width="72" height="1" fill="#000"/><rect x="740" y="444" width="72" height="1" fill="#000"/><rect x="740" y="424" width="1" height="21" fill="#000"/><rect x="811" y="424" width="1" height="21" fill="#000"/><rect x="811" y="424" width="75" height="1" fill="#000"/><rect x="811" y="444" width="75" height="1" fill="#000"/><rect x="811" y="424" width="1" height="21" fill="#000"/><rect x="885" y="424" width="1" height="21" fill="#000"/><rect x="885" y="424" width="60" height="1" fill="#000"/><rect x="885" y="444" width="60" height="1" fill="#000"/><rect x="885" y="424" width="1" height="21" fill="#000"/><rect x="944" y="424" width="1" height="21" fill="#000"/><rect x="944" y="424" width="84" height="1" fill="#000"/><rect x="944" y="444" width="84" height="1" fill="#000"/><rect x="944" y="424" width="1" height="21" fill="#000"/><rect x="1027" y="424" width="1" height="21" fill="#000"/><rect x="20" y="444" width="72" height="1" fill="#000"/><rect x="20" y="464" width="72" height="1" fill="#000"/><rect x="20" y="444" width="1" height="21" fill="#000"/><rect x="91" y="444" width="1" height="21" fill="#000"/><rect x="265" y="444" width="80" height="1" fill="#000"/><rect x="265" y="464" width="80" height="1" fill="#000"/><rect x="265" y="444" width="1" height="21" fill="#000"/><rect x="344" y="444" width="1" height="21" fill="#000"/><rect x="344" y="444" width="50" height="1" fill="#000"/><rect x="344" y="464" width="50" height="1" fill="#000"/><rect x="344" y="444" width="1" height="21" fill="#000"/><rect x="393" y="444" width="1" height="21" fill="#000"/><rect x="393" y="444" width="74" height="1" fill="#000"/><rect x="393" y="464" width="74" height="1" fill="#000"/><rect x="393" y="444" width="1" height="21" fill="#000"/><rect x="466" y="444" width="1" height="21" fill="#000"/><rect x="466" y="444" width="73" height="1" fill="#000"/><rect x="466" y="464" width="73" height="1" fill="#000"/><rect x="466" y="444" width="1" height="21" fill="#000"/><rect x="538" y="444" width="1" height="21" fill="#000"/><rect x="538" y="444" width="71" height="1" fill="#000"/><rect x="538" y="464" width="71" height="1" fill="#000"/><rect x="538" y="444" width="1" height="21" fill="#000"/><rect x="608" y="444" width="1" height="21" fill="#000"/><rect x="608" y="444" width="72" height="1" fill="#000"/><rect x="608" y="464" width="72" height="1" fill="#000"/><rect x="608" y="444" width="1" height="21" fill="#000"/><rect x="679" y="444" width="1" height="21" fill="#000"/><rect x="679" y="444" width="62" height="1" fill="#000"/><rect x="679" y="464" width="62" height="1" fill="#000"/><rect x="679" y="444" width="1" height="21" fill="#000"/><rect x="740" y="444" width="1" height="21" fill="#000"/><rect x="740" y="444" width="72" height="1" fill="#000"/><rect x="740" y="464" width="72" height="1" fill="#000"/><rect x="740" y="444" width="1" height="21" fill="#000"/><rect x="811" y="444" width="1" height="21" fill="#000"/><rect x="811" y="444" width="75" height="1" fill="#000"/><rect x="811" y="464" width="75" height="1" fill="#000"/><rect x="811" y="444" width="1" height="21" fill="#000"/><rect x="885" y="444" width="1" height="21" fill="#000"/><rect x="885" y="444" width="60" height="1" fill="#000"/><rect x="885" y="464" width="60" height="1" fill="#000"/><rect x="885" y="444" width="1" height="21" fill="#000"/><rect x="944" y="444" width="1" height="21" fill="#000"/><rect x="944" y="444" width="84" height="1" fill="#000"/><rect x="944" y="464" width="84" height="1" fill="#000"/><rect x="944" y="444" width="1" height="21" fill="#000"/><rect x="1027" y="444" width="1" height="21" fill="#000"/><rect x="20" y="464" width="72" height="1" fill="#000"/><rect x="20" y="484" width="72" height="1" fill="#000"/><rect x="20" y="464" width="1" height="21" fill="#000"/><rect x="91" y="464" width="1" height="21" fill="#000"/><rect x="265" y="464" width="80" height="1" fill="#000"/><rect x="265" y="484" width="80" height="1" fill="#000"/><rect x="265" y="464" width="1" height="21" fill="#000"/><rect x="344" y="464" width="1" height="21" fill="#000"/><rect x="344" y="464" width="50" height="1" fill="#000"/><rect x="344" y="484" width="50" height="1" fill="#000"/><rect x="344" y="464" width="1" height="21" fill="#000"/><rect x="393" y="464" width="1" height="21" fill="#000"/><rect x="393" y="464" width="74" height="1" fill="#000"/><rect x="393" y="484" width="74" height="1" fill="#000"/><rect x="393" y="464" width="1" height="21" fill="#000"/><rect x="466" y="464" width="1" height="21" fill="#000"/><rect x="466" y="464" width="73" height="1" fill="#000"/><rect x="466" y="484" width="73" height="1" fill="#000"/><rect x="466" y="464" width="1" height="21" fill="#000"/><rect x="538" y="464" width="1" height="21" fill="#000"/><rect x="538" y="464" width="71" height="1" fill="#000"/><rect x="538" y="484" width="71" height="1" fill="#000"/><rect x="538" y="464" width="1" height="21" fill="#000"/><rect x="608" y="464" width="1" height="21" fill="#000"/><rect x="608" y="464" width="72" height="1" fill="#000"/><rect x="608" y="484" width="72" height="1" fill="#000"/><rect x="608" y="464" width="1" height="21" fill="#000"/><rect x="679" y="464" width="1" height="21" fill="#000"/><rect x="679" y="464" width="62" height="1" fill="#000"/><rect x="679" y="484" width="62" height="1" fill="#000"/><rect x="679" y="464" width="1" height="21" fill="#000"/><rect x="740" y="464" width="1" height="21" fill="#000"/><rect x="740" y="464" width="72" height="1" fill="#000"/><rect x="740" y="484" width="72" height="1" fill="#000"/><rect x="740" y="464" width="1" height="21" fill="#000"/><rect x="811" y="464" width="1" height="21" fill="#000"/><rect x="811" y="464" width="75" height="1" fill="#000"/><rect x="811" y="484" width="75" height="1" fill="#000"/><rect x="811" y="464" width="1" height="21" fill="#000"/><rect x="885" y="464" width="1" height="21" fill="#000"/><rect x="885" y="464" width="60" height="1" fill="#000"/><rect x="885" y="484" width="60" height="1" fill="#000"/><rect x="885" y="464" width="1" height="21" fill="#000"/><rect x="944" y="464" width="1" height="21" fill="#000"/><rect x="944" y="464" width="84" height="1" fill="#000"/><rect x="944" y="484" width="84" height="1" fill="#000"/><rect x="944" y="464" width="1" height="21" fill="#000"/><rect x="1027" y="464" width="1" height="21" fill="#000"/><rect x="20" y="484" width="72" height="1" fill="#000"/><rect x="20" y="504" width="72" height="1" fill="#000"/><rect x="20" y="484" width="1" height="21" fill="#000"/><rect x="91" y="484" width="1" height="21" fill="#000"/><rect x="265" y="484" width="80" height="1" fill="#000"/><rect x="265" y="504" width="80" height="1" fill="#000"/><rect x="265" y="484" width="1" height="21" fill="#000"/><rect x="344" y="484" width="1" height="21" fill="#000"/><rect x="344" y="484" width="50" height="1" fill="#000"/><rect x="344" y="504" width="50" height="1" fill="#000"/><rect x="344" y="484" width="1" height="21" fill="#000"/><rect x="393" y="484" width="1" height="21" fill="#000"/><rect x="393" y="484" width="74" height="1" fill="#000"/><rect x="393" y="504" width="74" height="1" fill="#000"/><rect x="393" y="484" width="1" height="21" fill="#000"/><rect x="466" y="484" width="1" height="21" fill="#000"/><rect x="466" y="484" width="73" height="1" fill="#000"/><rect x="466" y="504" width="73" height="1" fill="#000"/><rect x="466" y="484" width="1" height="21" fill="#000"/><rect x="538" y="484" width="1" height="21" fill="#000"/><rect x="538" y="484" width="71" height="1" fill="#000"/><rect x="538" y="504" width="71" height="1" fill="#000"/><rect x="538" y="484" width="1" height="21" fill="#000"/><rect x="608" y="484" width="1" height="21" fill="#000"/><rect x="608" y="484" width="72" height="1" fill="#000"/><rect x="608" y="504" width="72" height="1" fill="#000"/><rect x="608" y="484" width="1" height="21" fill="#000"/><rect x="679" y="484" width="1" height="21" fill="#000"/><rect x="679" y="484" width="62" height="1" fill="#000"/><rect x="679" y="504" width="62" height="1" fill="#000"/><rect x="679" y="484" width="1" height="21" fill="#000"/><rect x="740" y="484" width="1" height="21" fill="#000"/><rect x="740" y="484" width="72" height="1" fill="#000"/><rect x="740" y="504" width="72" height="1" fill="#000"/><rect x="740" y="484" width="1" height="21" fill="#000"/><rect x="811" y="484" width="1" height="21" fill="#000"/><rect x="811" y="484" width="75" height="1" fill="#000"/><rect x="811" y="504" width="75" height="1" fill="#000"/><rect x="811" y="484" width="1" height="21" fill="#000"/><rect x="885" y="484" width="1" height="21" fill="#000"/><rect x="885" y="484" width="60" height="1" fill="#000"/><rect x="885" y="504" width="60" height="1" fill="#000"/><rect x="885" y="484" width="1" height="21" fill="#000"/><rect x="944" y="484" width="1" height="21" fill="#000"/><rect x="944" y="484" width="84" height="1" fill="#000"/><rect x="944" y="504" width="84" height="1" fill="#000"/><rect x="944" y="484" width="1" height="21" fill="#000"/><rect x="1027" y="484" width="1" height="21" fill="#000"/><rect x="20" y="504" width="72" height="1" fill="#000"/><rect x="20" y="524" width="72" height="1" fill="#000"/><rect x="20" y="504" width="1" height="21" fill="#000"/><rect x="91" y="504" width="1" height="21" fill="#000"/><rect x="265" y="504" width="80" height="1" fill="#000"/><rect x="265" y="524" width="80" height="1" fill="#000"/><rect x="265" y="504" width="1" height="21" fill="#000"/><rect x="344" y="504" width="1" height="21" fill="#000"/><rect x="344" y="504" width="50" height="1" fill="#000"/><rect x="344" y="524" width="50" height="1" fill="#000"/><rect x="344" y="504" width="1" height="21" fill="#000"/><rect x="393" y="504" width="1" height="21" fill="#000"/><rect x="393" y="504" width="74" height="1" fill="#000"/><rect x="393" y="524" width="74" height="1" fill="#000"/><rect x="393" y="504" width="1" height="21" fill="#000"/><rect x="466" y="504" width="1" height="21" fill="#000"/><rect x="466" y="504" width="73" height="1" fill="#000"/><rect x="466" y="524" width="73" height="1" fill="#000"/><rect x="466" y="504" width="1" height="21" fill="#000"/><rect x="538" y="504" width="1" height="21" fill="#000"/><rect x="538" y="504" width="71" height="1" fill="#000"/><rect x="538" y="524" width="71" height="1" fill="#000"/><rect x="538" y="504" width="1" height="21" fill="#000"/><rect x="608" y="504" width="1" height="21" fill="#000"/><rect x="608" y="504" width="72" height="1" fill="#000"/><rect x="608" y="524" width="72" height="1" fill="#000"/><rect x="608" y="504" width="1" height="21" fill="#000"/><rect x="679" y="504" width="1" height="21" fill="#000"/><rect x="679" y="504" width="62" height="1" fill="#000"/><rect x="679" y="524" width="62" height="1" fill="#000"/><rect x="679" y="504" width="1" height="21" fill="#000"/><rect x="740" y="504" width="1" height="21" fill="#000"/><rect x="740" y="504" width="72" height="1" fill="#000"/><rect x="740" y="524" width="72" height="1" fill="#000"/><rect x="740" y="504" width="1" height="21" fill="#000"/><rect x="811" y="504" width="1" height="21" fill="#000"/><rect x="811" y="504" width="75" height="1" fill="#000"/><rect x="811" y="524" width="75" height="1" fill="#000"/><rect x="811" y="504" width="1" height="21" fill="#000"/><rect x="885" y="504" width="1" height="21" fill="#000"/><rect x="885" y="504" width="60" height="1" fill="#000"/><rect x="885" y="524" width="60" height="1" fill="#000"/><rect x="885" y="504" width="1" height="21" fill="#000"/><rect x="944" y="504" width="1" height="21" fill="#000"/><rect x="944" y="504" width="84" height="1" fill="#000"/><rect x="944" y="524" width="84" height="1" fill="#000"/><rect x="944" y="504" width="1" height="21" fill="#000"/><rect x="1027" y="504" width="1" height="21" fill="#000"/><rect x="20" y="524" width="72" height="1" fill="#000"/><rect x="20" y="544" width="72" height="1" fill="#000"/><rect x="20" y="524" width="1" height="21" fill="#000"/><rect x="91" y="524" width="1" height="21" fill="#000"/><rect x="265" y="524" width="80" height="1" fill="#000"/><rect x="265" y="544" width="80" height="1" fill="#000"/><rect x="265" y="524" width="1" height="21" fill="#000"/><rect x="344" y="524" width="1" height="21" fill="#000"/><rect x="344" y="524" width="50" height="1" fill="#000"/><rect x="344" y="544" width="50" height="1" fill="#000"/><rect x="344" y="524" width="1" height="21" fill="#000"/><rect x="393" y="524" width="1" height="21" fill="#000"/><rect x="393" y="524" width="74" height="1" fill="#000"/><rect x="393" y="544" width="74" height="1" fill="#000"/><rect x="393" y="524" width="1" height="21" fill="#000"/><rect x="466" y="524" width="1" height="21" fill="#000"/><rect x="466" y="524" width="73" height="1" fill="#000"/><rect x="466" y="544" width="73" height="1" fill="#000"/><rect x="466" y="524" width="1" height="21" fill="#000"/><rect x="538" y="524" width="1" height="21" fill="#000"/><rect x="538" y="524" width="71" height="1" fill="#000"/><rect x="538" y="544" width="71" height="1" fill="#000"/><rect x="538" y="524" width="1" height="21" fill="#000"/><rect x="608" y="524" width="1" height="21" fill="#000"/><rect x="608" y="524" width="72" height="1" fill="#000"/><rect x="608" y="544" width="72" height="1" fill="#000"/><rect x="608" y="524" width="1" height="21" fill="#000"/><rect x="679" y="524" width="1" height="21" fill="#000"/><rect x="679" y="524" width="62" height="1" fill="#000"/><rect x="679" y="544" width="62" height="1" fill="#000"/><rect x="679" y="524" width="1" height="21" fill="#000"/><rect x="740" y="524" width="1" height="21" fill="#000"/><rect x="740" y="524" width="72" height="1" fill="#000"/><rect x="740" y="544" width="72" height="1" fill="#000"/><rect x="740" y="524" width="1" height="21" fill="#000"/><rect x="811" y="524" width="1" height="21" fill="#000"/><rect x="811" y="524" width="75" height="1" fill="#000"/><rect x="811" y="544" width="75" height="1" fill="#000"/><rect x="811" y="524" width="1" height="21" fill="#000"/><rect x="885" y="524" width="1" height="21" fill="#000"/><rect x="885" y="524" width="60" height="1" fill="#000"/><rect x="885" y="544" width="60" height="1" fill="#000"/><rect x="885" y="524" width="1" height="21" fill="#000"/><rect x="944" y="524" width="1" height="21" fill="#000"/><rect x="944" y="524" width="84" height="1" fill="#000"/><rect x="944" y="544" width="84" height="1" fill="#000"/><rect x="944" y="524" width="1" height="21" fill="#000"/><rect x="1027" y="524" width="1" height="21" fill="#000"/><rect x="20" y="544" width="72" height="1" fill="#000"/><rect x="20" y="564" width="72" height="1" fill="#000"/><rect x="20" y="544" width="1" height="21" fill="#000"/><rect x="91" y="544" width="1" height="21" fill="#000"/><rect x="265" y="544" width="80" height="1" fill="#000"/><rect x="265" y="564" width="80" height="1" fill="#000"/><rect x="265" y="544" width="1" height="21" fill="#000"/><rect x="344" y="544" width="1" height="21" fill="#000"/><rect x="344" y="544" width="50" height="1" fill="#000"/><rect x="344" y="564" width="50" height="1" fill="#000"/><rect x="344" y="544" width="1" height="21" fill="#000"/><rect x="393" y="544" width="1" height="21" fill="#000"/><rect x="393" y="544" width="74" height="1" fill="#000"/><rect x="393" y="564" width="74" height="1" fill="#000"/><rect x="393" y="544" width="1" height="21" fill="#000"/><rect x="466" y="544" width="1" height="21" fill="#000"/><rect x="466" y="544" width="73" height="1" fill="#000"/><rect x="466" y="564" width="73" height="1" fill="#000"/><rect x="466" y="544" width="1" height="21" fill="#000"/><rect x="538" y="544" width="1" height="21" fill="#000"/><rect x="538" y="544" width="71" height="1" fill="#000"/><rect x="538" y="564" width="71" height="1" fill="#000"/><rect x="538" y="544" width="1" height="21" fill="#000"/><rect x="608" y="544" width="1" height="21" fill="#000"/><rect x="608" y="544" width="72" height="1" fill="#000"/><rect x="608" y="564" width="72" height="1" fill="#000"/><rect x="608" y="544" width="1" height="21" fill="#000"/><rect x="679" y="544" width="1" height="21" fill="#000"/><rect x="679" y="544" width="62" height="1" fill="#000"/><rect x="679" y="564" width="62" height="1" fill="#000"/><rect x="679" y="544" width="1" height="21" fill="#000"/><rect x="740" y="544" width="1" height="21" fill="#000"/><rect x="740" y="544" width="72" height="1" fill="#000"/><rect x="740" y="564" width="72" height="1" fill="#000"/><rect x="740" y="544" width="1" height="21" fill="#000"/><rect x="811" y="544" width="1" height="21" fill="#000"/><rect x="811" y="544" width="75" height="1" fill="#000"/><rect x="811" y="564" width="75" height="1" fill="#000"/><rect x="811" y="544" width="1" height="21" fill="#000"/><rect x="885" y="544" width="1" height="21" fill="#000"/><rect x="885" y="544" width="60" height="1" fill="#000"/><rect x="885" y="564" width="60" height="1" fill="#000"/><rect x="885" y="544" width="1" height="21" fill="#000"/><rect x="944" y="544" width="1" height="21" fill="#000"/><rect x="944" y="544" width="84" height="1" fill="#000"/><rect x="944" y="564" width="84" height="1" fill="#000"/><rect x="944" y="544" width="1" height="21" fill="#000"/><rect x="1027" y="544" width="1" height="21" fill="#000"/><rect x="20" y="564" width="72" height="1" fill="#000"/><rect x="20" y="584" width="72" height="1" fill="#000"/><rect x="20" y="564" width="1" height="21" fill="#000"/><rect x="91" y="564" width="1" height="21" fill="#000"/><rect x="265" y="564" width="80" height="1" fill="#000"/><rect x="265" y="584" width="80" height="1" fill="#000"/><rect x="265" y="564" width="1" height="21" fill="#000"/><rect x="344" y="564" width="1" height="21" fill="#000"/><rect x="344" y="564" width="50" height="1" fill="#000"/><rect x="344" y="584" width="50" height="1" fill="#000"/><rect x="344" y="564" width="1" height="21" fill="#000"/><rect x="393" y="564" width="1" height="21" fill="#000"/><rect x="393" y="564" width="74" height="1" fill="#000"/><rect x="393" y="584" width="74" height="1" fill="#000"/><rect x="393" y="564" width="1" height="21" fill="#000"/><rect x="466" y="564" width="1" height="21" fill="#000"/><rect x="466" y="564" width="73" height="1" fill="#000"/><rect x="466" y="584" width="73" height="1" fill="#000"/><rect x="466" y="564" width="1" height="21" fill="#000"/><rect x="538" y="564" width="1" height="21" fill="#000"/><rect x="538" y="564" width="71" height="1" fill="#000"/><rect x="538" y="584" width="71" height="1" fill="#000"/><rect x="538" y="564" width="1" height="21" fill="#000"/><rect x="608" y="564" width="1" height="21" fill="#000"/><rect x="608" y="564" width="72" height="1" fill="#000"/><rect x="608" y="584" width="72" height="1" fill="#000"/><rect x="608" y="564" width="1" height="21" fill="#000"/><rect x="679" y="564" width="1" height="21" fill="#000"/><rect x="679" y="564" width="62" height="1" fill="#000"/><rect x="679" y="584" width="62" height="1" fill="#000"/><rect x="679" y="564" width="1" height="21" fill="#000"/><rect x="740" y="564" width="1" height="21" fill="#000"/><rect x="740" y="564" width="72" height="1" fill="#000"/><rect x="740" y="584" width="72" height="1" fill="#000"/><rect x="740" y="564" width="1" height="21" fill="#000"/><rect x="811" y="564" width="1" height="21" fill="#000"/><rect x="811" y="564" width="75" height="1" fill="#000"/><rect x="811" y="584" width="75" height="1" fill="#000"/><rect x="811" y="564" width="1" height="21" fill="#000"/><rect x="885" y="564" width="1" height="21" fill="#000"/><rect x="885" y="564" width="60" height="1" fill="#000"/><rect x="885" y="584" width="60" height="1" fill="#000"/><rect x="885" y="564" width="1" height="21" fill="#000"/><rect x="944" y="564" width="1" height="21" fill="#000"/><rect x="944" y="564" width="84" height="1" fill="#000"/><rect x="944" y="584" width="84" height="1" fill="#000"/><rect x="944" y="564" width="1" height="21" fill="#000"/><rect x="1027" y="564" width="1" height="21" fill="#000"/><rect x="20" y="584" width="72" height="1" fill="#000"/><rect x="20" y="604" width="72" height="1" fill="#000"/><rect x="20" y="584" width="1" height="21" fill="#000"/><rect x="91" y="584" width="1" height="21" fill="#000"/><rect x="265" y="584" width="80" height="1" fill="#000"/><rect x="265" y="604" width="80" height="1" fill="#000"/><rect x="265" y="584" width="1" height="21" fill="#000"/><rect x="344" y="584" width="1" height="21" fill="#000"/><rect x="344" y="584" width="50" height="1" fill="#000"/><rect x="344" y="604" width="50" height="1" fill="#000"/><rect x="344" y="584" width="1" height="21" fill="#000"/><rect x="393" y="584" width="1" height="21" fill="#000"/><rect x="393" y="584" width="74" height="1" fill="#000"/><rect x="393" y="604" width="74" height="1" fill="#000"/><rect x="393" y="584" width="1" height="21" fill="#000"/><rect x="466" y="584" width="1" height="21" fill="#000"/><rect x="466" y="584" width="73" height="1" fill="#000"/><rect x="466" y="604" width="73" height="1" fill="#000"/><rect x="466" y="584" width="1" height="21" fill="#000"/><rect x="538" y="584" width="1" height="21" fill="#000"/><rect x="538" y="584" width="71" height="1" fill="#000"/><rect x="538" y="604" width="71" height="1" fill="#000"/><rect x="538" y="584" width="1" height="21" fill="#000"/><rect x="608" y="584" width="1" height="21" fill="#000"/><rect x="608" y="584" width="72" height="1" fill="#000"/><rect x="608" y="604" width="72" height="1" fill="#000"/><rect x="608" y="584" width="1" height="21" fill="#000"/><rect x="679" y="584" width="1" height="21" fill="#000"/><rect x="679" y="584" width="62" height="1" fill="#000"/><rect x="679" y="604" width="62" height="1" fill="#000"/><rect x="679" y="584" width="1" height="21" fill="#000"/><rect x="740" y="584" width="1" height="21" fill="#000"/><rect x="740" y="584" width="72" height="1" fill="#000"/><rect x="740" y="604" width="72" height="1" fill="#000"/><rect x="740" y="584" width="1" height="21" fill="#000"/><rect x="811" y="584" width="1" height="21" fill="#000"/><rect x="811" y="584" width="75" height="1" fill="#000"/><rect x="811" y="604" width="75" height="1" fill="#000"/><rect x="811" y="584" width="1" height="21" fill="#000"/><rect x="885" y="584" width="1" height="21" fill="#000"/><rect x="885" y="584" width="60" height="1" fill="#000"/><rect x="885" y="604" width="60" height="1" fill="#000"/><rect x="885" y="584" width="1" height="21" fill="#000"/><rect x="944" y="584" width="1" height="21" fill="#000"/><rect x="944" y="584" width="84" height="1" fill="#000"/><rect x="944" y="604" width="84" height="1" fill="#000"/><rect x="944" y="584" width="1" height="21" fill="#000"/><rect x="1027" y="584" width="1" height="21" fill="#000"/><rect x="20" y="604" width="72" height="1" fill="#000"/><rect x="20" y="624" width="72" height="1" fill="#000"/><rect x="20" y="604" width="1" height="21" fill="#000"/><rect x="91" y="604" width="1" height="21" fill="#000"/><rect x="265" y="604" width="80" height="1" fill="#000"/><rect x="265" y="624" width="80" height="1" fill="#000"/><rect x="265" y="604" width="1" height="21" fill="#000"/><rect x="344" y="604" width="1" height="21" fill="#000"/><rect x="344" y="604" width="50" height="1" fill="#000"/><rect x="344" y="624" width="50" height="1" fill="#000"/><rect x="344" y="604" width="1" height="21" fill="#000"/><rect x="393" y="604" width="1" height="21" fill="#000"/><rect x="393" y="604" width="74" height="1" fill="#000"/><rect x="393" y="624" width="74" height="1" fill="#000"/><rect x="393" y="604" width="1" height="21" fill="#000"/><rect x="466" y="604" width="1" height="21" fill="#000"/><rect x="466" y="604" width="73" height="1" fill="#000"/><rect x="466" y="624" width="73" height="1" fill="#000"/><rect x="466" y="604" width="1" height="21" fill="#000"/><rect x="538" y="604" width="1" height="21" fill="#000"/><rect x="538" y="604" width="71" height="1" fill="#000"/><rect x="538" y="624" width="71" height="1" fill="#000"/><rect x="538" y="604" width="1" height="21" fill="#000"/><rect x="608" y="604" width="1" height="21" fill="#000"/><rect x="608" y="604" width="72" height="1" fill="#000"/><rect x="608" y="624" width="72" height="1" fill="#000"/><rect x="608" y="604" width="1" height="21" fill="#000"/><rect x="679" y="604" width="1" height="21" fill="#000"/><rect x="679" y="604" width="62" height="1" fill="#000"/><rect x="679" y="624" width="62" height="1" fill="#000"/><rect x="679" y="604" width="1" height="21" fill="#000"/><rect x="740" y="604" width="1" height="21" fill="#000"/><rect x="740" y="604" width="72" height="1" fill="#000"/><rect x="740" y="624" width="72" height="1" fill="#000"/><rect x="740" y="604" width="1" height="21" fill="#000"/><rect x="811" y="604" width="1" height="21" fill="#000"/><rect x="811" y="604" width="75" height="1" fill="#000"/><rect x="811" y="624" width="75" height="1" fill="#000"/><rect x="811" y="604" width="1" height="21" fill="#000"/><rect x="885" y="604" width="1" height="21" fill="#000"/><rect x="885" y="604" width="60" height="1" fill="#000"/><rect x="885" y="624" width="60" height="1" fill="#000"/><rect x="885" y="604" width="1" height="21" fill="#000"/><rect x="944" y="604" width="1" height="21" fill="#000"/><rect x="944" y="604" width="84" height="1" fill="#000"/><rect x="944" y="624" width="84" height="1" fill="#000"/><rect x="944" y="604" width="1" height="21" fill="#000"/><rect x="1027" y="604" width="1" height="21" fill="#000"/><rect x="20" y="624" width="72" height="1" fill="#000"/><rect x="20" y="645" width="72" height="1" fill="#000"/><rect x="20" y="624" width="1" height="22" fill="#000"/><rect x="91" y="624" width="1" height="22" fill="#000"/><rect x="265" y="624" width="80" height="1" fill="#000"/><rect x="265" y="645" width="80" height="1" fill="#000"/><rect x="265" y="624" width="1" height="22" fill="#000"/><rect x="344" y="624" width="1" height="22" fill="#000"/><rect x="344" y="624" width="50" height="1" fill="#000"/><rect x="344" y="645" width="50" height="1" fill="#000"/><rect x="344" y="624" width="1" height="22" fill="#000"/><rect x="393" y="624" width="1" height="22" fill="#000"/><rect x="393" y="624" width="74" height="1" fill="#000"/><rect x="393" y="645" width="74" height="1" fill="#000"/><rect x="393" y="624" width="1" height="22" fill="#000"/><rect x="466" y="624" width="1" height="22" fill="#000"/><rect x="466" y="624" width="73" height="1" fill="#000"/><rect x="466" y="645" width="73" height="1" fill="#000"/><rect x="466" y="624" width="1" height="22" fill="#000"/><rect x="538" y="624" width="1" height="22" fill="#000"/><rect x="538" y="624" width="71" height="1" fill="#000"/><rect x="538" y="645" width="71" height="1" fill="#000"/><rect x="538" y="624" width="1" height="22" fill="#000"/><rect x="608" y="624" width="1" height="22" fill="#000"/><rect x="608" y="624" width="72" height="1" fill="#000"/><rect x="608" y="645" width="72" height="1" fill="#000"/><rect x="608" y="624" width="1" height="22" fill="#000"/><rect x="679" y="624" width="1" height="22" fill="#000"/><rect x="679" y="624" width="62" height="1" fill="#000"/><rect x="679" y="645" width="62" height="1" fill="#000"/><rect x="679" y="624" width="1" height="22" fill="#000"/><rect x="740" y="624" width="1" height="22" fill="#000"/><rect x="740" y="624" width="72" height="1" fill="#000"/><rect x="740" y="645" width="72" height="1" fill="#000"/><rect x="740" y="624" width="1" height="22" fill="#000"/><rect x="811" y="624" width="1" height="22" fill="#000"/><rect x="811" y="624" width="75" height="1" fill="#000"/><rect x="811" y="645" width="75" height="1" fill="#000"/><rect x="811" y="624" width="1" height="22" fill="#000"/><rect x="885" y="624" width="1" height="22" fill="#000"/><rect x="885" y="624" width="60" height="1" fill="#000"/><rect x="885" y="645" width="60" height="1" fill="#000"/><rect x="885" y="624" width="1" height="22" fill="#000"/><rect x="944" y="624" width="1" height="22" fill="#000"/><rect x="944" y="624" width="84" height="1" fill="#000"/><rect x="944" y="645" width="84" height="1" fill="#000"/><rect x="944" y="624" width="1" height="22" fill="#000"/><rect x="1027" y="624" width="1" height="22" fill="#000"/><rect x="91" y="404" width="66" height="1" fill="#000"/><rect x="91" y="645" width="66" height="1" fill="#000"/><rect x="91" y="404" width="1" height="242" fill="#000"/><rect x="156" y="404" width="1" height="242" fill="#000"/><rect x="156" y="404" width="22" height="1" fill="#000"/><rect x="156" y="645" width="22" height="1" fill="#000"/><rect x="156" y="404" width="1" height="242" fill="#000"/><rect x="177" y="404" width="1" height="242" fill="#000"/><rect x="177" y="404" width="47" height="1" fill="#000"/><rect x="177" y="645" width="47" height="1" fill="#000"/><rect x="177" y="404" width="1" height="242" fill="#000"/><rect x="223" y="404" width="1" height="242" fill="#000"/><rect x="223" y="404" width="43" height="1" fill="#000"/><rect x="223" y="645" width="43" height="1" fill="#000"/><rect x="223" y="404" width="1" height="242" fill="#000"/><rect x="265" y="404" width="1" height="242" fill="#000"/><rect x="265" y="645" width="80" height="1" fill="#000"/><rect x="265" y="666" width="80" height="1" fill="#000"/><rect x="265" y="645" width="1" height="22" fill="#000"/><rect x="344" y="645" width="1" height="22" fill="#000"/><rect x="393" y="645" width="74" height="1" fill="#000"/><rect x="393" y="666" width="74" height="1" fill="#000"/><rect x="393" y="645" width="1" height="22" fill="#000"/><rect x="466" y="645" width="1" height="22" fill="#000"/><rect x="538" y="645" width="71" height="1" fill="#000"/><rect x="538" y="666" width="71" height="1" fill="#000"/><rect x="538" y="645" width="1" height="22" fill="#000"/><rect x="608" y="645" width="1" height="22" fill="#000"/><rect x="608" y="645" width="72" height="1" fill="#000"/><rect x="608" y="666" width="72" height="1" fill="#000"/><rect x="608" y="645" width="1" height="22" fill="#000"/><rect x="679" y="645" width="1" height="22" fill="#000"/><rect x="679" y="645" width="62" height="1" fill="#000"/><rect x="679" y="666" width="62" height="1" fill="#000"/><rect x="679" y="645" width="1" height="22" fill="#000"/><rect x="740" y="645" width="1" height="22" fill="#000"/><rect x="740" y="645" width="72" height="1" fill="#000"/><rect x="740" y="666" width="72" height="1" fill="#000"/><rect x="740" y="645" width="1" height="22" fill="#000"/><rect x="811" y="645" width="1" height="22" fill="#000"/><rect x="811" y="645" width="75" height="1" fill="#000"/><rect x="811" y="666" width="75" height="1" fill="#000"/><rect x="811" y="645" width="1" height="22" fill="#000"/><rect x="885" y="645" width="1" height="22" fill="#000"/><rect x="885" y="645" width="60" height="1" fill="#000"/><rect x="885" y="666" width="60" height="1" fill="#000"/><rect x="885" y="645" width="1" height="22" fill="#000"/><rect x="944" y="645" width="1" height="22" fill="#000"/><rect x="176" y="644" width="90" height="2" fill="#000"/><rect x="176" y="665" width="90" height="2" fill="#000"/><rect x="176" y="644" width="2" height="23" fill="#000"/><rect x="264" y="644" width="2" height="23" fill="#000"/><rect x="943" y="644" width="85" height="2" fill="#000"/><rect x="943" y="665" width="85" height="2" fill="#000"/><rect x="943" y="644" width="2" height="23" fill="#000"/><rect x="1026" y="644" width="2" height="23" fill="#000"/><rect x="0" y="244" width="1339" height="1" fill="#ababab"/><rect x="20" y="226" width="1" height="449" fill="#ababab"/><rect x="1339" y="244" width="1" height="431" fill="#ababab"/></svg>
<div style="position:absolute;left:740px;top:243px;width:72px;height:2px;background:#217346;"></div>
<svg style="position:absolute;left:6px;top:230px;" width="11" height="11" viewBox="0 0 11 11"><path d="M11 0v11h-11z" fill="#dfdfdf"/></svg>
<div style="position:absolute;left:16.0px;top:225.5px;width:80px;text-align:center;line-height:20px;height:20px;font-size:12.5px;color:#444;font-weight:normal;white-space:pre;">A</div>
<div style="position:absolute;left:84.0px;top:225.5px;width:80px;text-align:center;line-height:20px;height:20px;font-size:12.5px;color:#444;font-weight:normal;white-space:pre;">B</div>
<div style="position:absolute;left:127.0px;top:225.5px;width:80px;text-align:center;line-height:20px;height:20px;font-size:12.5px;color:#444;font-weight:normal;white-space:pre;">C</div>
<div style="position:absolute;left:160.5px;top:225.5px;width:80px;text-align:center;line-height:20px;height:20px;font-size:12.5px;color:#444;font-weight:normal;white-space:pre;">D</div>
<div style="position:absolute;left:204.5px;top:225.5px;width:80px;text-align:center;line-height:20px;height:20px;font-size:12.5px;color:#444;font-weight:normal;white-space:pre;">E</div>
<div style="position:absolute;left:265.0px;top:225.5px;width:80px;text-align:center;line-height:20px;height:20px;font-size:12.5px;color:#444;font-weight:normal;white-space:pre;">F</div>
<div style="position:absolute;left:329.0px;top:225.5px;width:80px;text-align:center;line-height:20px;height:20px;font-size:12.5px;color:#444;font-weight:normal;white-space:pre;">G</div>
<div style="position:absolute;left:390.0px;top:225.5px;width:80px;text-align:center;line-height:20px;height:20px;font-size:12.5px;color:#444;font-weight:normal;white-space:pre;">H</div>
<div style="position:absolute;left:462.5px;top:225.5px;width:80px;text-align:center;line-height:20px;height:20px;font-size:12.5px;color:#444;font-weight:normal;white-space:pre;">I</div>
<div style="position:absolute;left:533.5px;top:225.5px;width:80px;text-align:center;line-height:20px;height:20px;font-size:12.5px;color:#444;font-weight:normal;white-space:pre;">J</div>
<div style="position:absolute;left:604.0px;top:225.5px;width:80px;text-align:center;line-height:20px;height:20px;font-size:12.5px;color:#444;font-weight:normal;white-space:pre;">K</div>
<div style="position:absolute;left:670.0px;top:225.5px;width:80px;text-align:center;line-height:20px;height:20px;font-size:12.5px;color:#444;font-weight:normal;white-space:pre;">L</div>
<div style="position:absolute;left:736.0px;top:225.0px;width:80px;text-align:center;line-height:20px;height:20px;font-size:13.5px;color:#217346;font-weight:bold;white-space:pre;">M</div>
<div style="position:absolute;left:808.5px;top:225.5px;width:80px;text-align:center;line-height:20px;height:20px;font-size:12.5px;color:#444;font-weight:normal;white-space:pre;">N</div>
<div style="position:absolute;left:875.0px;top:225.5px;width:80px;text-align:center;line-height:20px;height:20px;font-size:12.5px;color:#444;font-weight:normal;white-space:pre;">O</div>
<div style="position:absolute;left:946.0px;top:225.5px;width:80px;text-align:center;line-height:20px;height:20px;font-size:12.5px;color:#444;font-weight:normal;white-space:pre;">P</div>
<div style="position:absolute;left:1026.5px;top:225.5px;width:80px;text-align:center;line-height:20px;height:20px;font-size:12.5px;color:#444;font-weight:normal;white-space:pre;">Q</div>
<div style="position:absolute;left:1106.5px;top:225.5px;width:80px;text-align:center;line-height:20px;height:20px;font-size:12.5px;color:#444;font-weight:normal;white-space:pre;">R</div>
<div style="position:absolute;left:1186.5px;top:225.5px;width:80px;text-align:center;line-height:20px;height:20px;font-size:12.5px;color:#444;font-weight:normal;white-space:pre;">S</div>
<div style="position:absolute;left:1264.5px;top:225.5px;width:80px;text-align:center;line-height:20px;height:20px;font-size:12.5px;color:#444;font-weight:normal;white-space:pre;">T</div>
<div style="position:absolute;left:0;top:244px;width:20px;height:431px;overflow:hidden;">
<div style="position:absolute;left:0;top:1px;width:20px;height:9px;overflow:hidden;">
<div style="position:absolute;left:-2px;top:-10.5px;width:20px;text-align:center;line-height:20px;font-size:11.5px;color:#444;">1</div>
</div>
<div style="position:absolute;left:0;top:11px;width:20px;height:17px;overflow:hidden;">
<div style="position:absolute;left:-2px;top:-4px;width:20px;text-align:center;line-height:20px;font-size:11.5px;color:#444;">2</div>
</div>
<div style="position:absolute;left:0;top:29px;width:20px;height:14px;overflow:hidden;">
<div style="position:absolute;left:-2px;top:-4.199999999999989px;width:20px;text-align:center;line-height:20px;font-size:11.5px;color:#444;">3</div>
</div>
<div style="position:absolute;left:0;top:44px;width:20px;height:17px;overflow:hidden;">
<div style="position:absolute;left:-2px;top:-2.5px;width:20px;text-align:center;line-height:20px;font-size:11.5px;color:#444;">4</div>
</div>
<div style="position:absolute;left:0;top:62px;width:20px;height:10px;overflow:hidden;">
<div style="position:absolute;left:-2px;top:-9.5px;width:20px;text-align:center;line-height:20px;font-size:11.5px;color:#444;">5</div>
</div>
<div style="position:absolute;left:0;top:73px;width:20px;height:8px;overflow:hidden;">
<div style="position:absolute;left:-2px;top:-11.5px;width:20px;text-align:center;line-height:20px;font-size:11.5px;color:#444;">6</div>
</div>
<div style="position:absolute;left:0;top:82px;width:20px;height:78px;overflow:hidden;">
<div style="position:absolute;left:-2px;top:60.5px;width:20px;text-align:center;line-height:20px;font-size:11.5px;color:#444;">7</div>
</div>
<div style="position:absolute;left:0;top:161px;width:20px;height:19px;overflow:hidden;">
<div style="position:absolute;left:-2px;top:1px;width:20px;text-align:center;line-height:20px;font-size:11.5px;color:#444;">8</div>
</div>
<div style="position:absolute;left:0;top:181px;width:20px;height:19px;overflow:hidden;">
<div style="position:absolute;left:-2px;top:1px;width:20px;text-align:center;line-height:20px;font-size:11.5px;color:#444;">9</div>
</div>
<div style="position:absolute;left:0;top:201px;width:20px;height:19px;overflow:hidden;">
<div style="position:absolute;left:-2px;top:1px;width:20px;text-align:center;line-height:20px;font-size:11.5px;color:#444;">10</div>
</div>
<div style="position:absolute;left:0;top:221px;width:20px;height:19px;overflow:hidden;">
<div style="position:absolute;left:-2px;top:1px;width:20px;text-align:center;line-height:20px;font-size:11.5px;color:#444;">11</div>
</div>
<div style="position:absolute;left:0;top:241px;width:20px;height:19px;overflow:hidden;">
<div style="position:absolute;left:-2px;top:1px;width:20px;text-align:center;line-height:20px;font-size:11.5px;color:#444;">12</div>
</div>
<div style="position:absolute;left:0;top:261px;width:20px;height:19px;overflow:hidden;">
<div style="position:absolute;left:-2px;top:1px;width:20px;text-align:center;line-height:20px;font-size:11.5px;color:#444;">13</div>
</div>
<div style="position:absolute;left:0;top:281px;width:20px;height:19px;overflow:hidden;">
<div style="position:absolute;left:-2px;top:1px;width:20px;text-align:center;line-height:20px;font-size:11.5px;color:#444;">14</div>
</div>
<div style="position:absolute;left:0;top:301px;width:20px;height:19px;overflow:hidden;">
<div style="position:absolute;left:-2px;top:1px;width:20px;text-align:center;line-height:20px;font-size:11.5px;color:#444;">15</div>
</div>
<div style="position:absolute;left:0;top:321px;width:20px;height:19px;overflow:hidden;">
<div style="position:absolute;left:-2px;top:1px;width:20px;text-align:center;line-height:20px;font-size:11.5px;color:#444;">16</div>
</div>
<div style="position:absolute;left:0;top:341px;width:20px;height:19px;overflow:hidden;">
<div style="position:absolute;left:-2px;top:1px;width:20px;text-align:center;line-height:20px;font-size:11.5px;color:#444;">17</div>
</div>
<div style="position:absolute;left:0;top:361px;width:20px;height:19px;overflow:hidden;">
<div style="position:absolute;left:-2px;top:1px;width:20px;text-align:center;line-height:20px;font-size:11.5px;color:#444;">18</div>
</div>
<div style="position:absolute;left:0;top:381px;width:20px;height:20px;overflow:hidden;">
<div style="position:absolute;left:-2px;top:1px;width:20px;text-align:center;line-height:20px;font-size:11.5px;color:#444;">19</div>
</div>
<div style="position:absolute;left:0;top:402px;width:20px;height:20px;overflow:hidden;">
<div style="position:absolute;left:-2px;top:1px;width:20px;text-align:center;line-height:20px;font-size:11.5px;color:#444;">20</div>
</div>
<div style="position:absolute;left:0;top:423px;width:20px;height:19px;overflow:hidden;">
<div style="position:absolute;left:-2px;top:-9px;width:20px;text-align:center;line-height:20px;font-size:11.5px;color:#444;">21</div>
</div>
</div>
<div style="position:absolute;left:1340px;top:226px;width:21px;height:449px;background:#fff;"></div>
<div style="position:absolute;left:1343px;top:290px;width:15px;height:372px;background:#f1f1f1;"></div>
<div style="position:absolute;left:1343px;top:228px;width:15px;height:15px;border:1px solid #ababab;background:#fff;"></div>
<svg style="position:absolute;left:1347px;top:233px;" width="7" height="4" viewBox="0 0 7 4"><path d="M0 4h7l-3.5-4z" fill="#777"/></svg>
<div style="position:absolute;left:1343px;top:242px;width:15px;height:49px;border:1px solid #ababab;border-top-width:2px;background:#fff;"></div>
<div style="position:absolute;left:1340px;top:658px;width:21px;height:20px;background:#fff;"></div>
<div style="position:absolute;left:1343px;top:661px;width:15px;height:15px;border:1px solid #b4b4b4;background:#fff;"></div>
<svg style="position:absolute;left:1347px;top:667px;" width="7" height="4" viewBox="0 0 7 4"><path d="M0 0h7l-3.5 4z" fill="#777"/></svg>
<div style="position:absolute;left:153.5px;top:254.0px;width:600px;text-align:center;line-height:20px;height:20px;font-size:14.5px;color:#000;font-weight:bold;white-space:pre;transform:scaleX(0.925);">GOBIERNO PARROQUIAL SAN PLÁCIDO</div>
<div style="position:absolute;left:153.5px;top:269.5px;width:600px;text-align:center;line-height:20px;height:20px;font-size:14.5px;color:#000;font-weight:bold;white-space:pre;transform:scaleX(0.96);">RUC: 1360024570001</div>
<div style="position:absolute;left:103.0px;top:285.0px;width:700px;text-align:center;line-height:20px;height:20px;font-size:14.5px;color:#000;font-weight:bold;white-space:pre;transform:scaleX(0.94);">CUADRO COMPARATIVO PARA ANEXO EN RELACIÓN DE DEPENDENCIA 2020</div>
<div style="position:absolute;left:196px;top:302px;width:514px;height:1px;background:#000;"></div>
<div style="position:absolute;left:196px;top:304px;width:514px;height:1px;background:#000;"></div>
<div style="position:absolute;left:23px;top:386.5px;line-height:20px;height:20px;font-size:11px;color:#000;font-weight:bold;white-space:pre;">MES</div>
<div style="position:absolute;left:94px;top:386.5px;line-height:20px;height:20px;font-size:11px;color:#000;font-weight:bold;white-space:pre;">NOMBRE</div>
<div style="position:absolute;left:122.0px;top:327.0px;width:90px;text-align:center;line-height:20px;height:20px;font-size:11px;color:#000;font-weight:bold;white-space:pre;">N°</div>
<div style="position:absolute;left:122.0px;top:342.0px;width:90px;text-align:center;line-height:20px;height:20px;font-size:11px;color:#000;font-weight:bold;white-space:pre;">CÉ</div>
<div style="position:absolute;left:122.0px;top:357.0px;width:90px;text-align:center;line-height:20px;height:20px;font-size:11px;color:#000;font-weight:bold;white-space:pre;">D</div>
<div style="position:absolute;left:122.0px;top:372.0px;width:90px;text-align:center;line-height:20px;height:20px;font-size:11px;color:#000;font-weight:bold;white-space:pre;">UL</div>
<div style="position:absolute;left:122.0px;top:387.0px;width:90px;text-align:center;line-height:20px;height:20px;font-size:11px;color:#000;font-weight:bold;white-space:pre;">A</div>
<div style="position:absolute;left:155.5px;top:331.0px;width:90px;text-align:center;line-height:20px;height:20px;font-size:10.6px;color:#000;font-weight:bold;white-space:pre;">FUNCI</div>
<div style="position:absolute;left:155.5px;top:342.8px;width:90px;text-align:center;line-height:20px;height:20px;font-size:10.6px;color:#000;font-weight:bold;white-space:pre;">ÓN</div>
<div style="position:absolute;left:155.5px;top:354.6px;width:90px;text-align:center;line-height:20px;height:20px;font-size:10.6px;color:#000;font-weight:bold;white-space:pre;">QUE</div>
<div style="position:absolute;left:155.5px;top:366.4px;width:90px;text-align:center;line-height:20px;height:20px;font-size:10.6px;color:#000;font-weight:bold;white-space:pre;">DESEM</div>
<div style="position:absolute;left:155.5px;top:378.2px;width:90px;text-align:center;line-height:20px;height:20px;font-size:10.6px;color:#000;font-weight:bold;white-space:pre;">PEÑA</div>
<div style="position:absolute;left:199.5px;top:325.0px;width:90px;text-align:center;line-height:20px;height:20px;font-size:11px;color:#000;font-weight:bold;white-space:pre;">RELA</div>
<div style="position:absolute;left:199.5px;top:340.0px;width:90px;text-align:center;line-height:20px;height:20px;font-size:11px;color:#000;font-weight:bold;white-space:pre;">CIÓN</div>
<div style="position:absolute;left:199.5px;top:355.0px;width:90px;text-align:center;line-height:20px;height:20px;font-size:11px;color:#000;font-weight:bold;white-space:pre;">DE</div>
<div style="position:absolute;left:199.5px;top:370.0px;width:90px;text-align:center;line-height:20px;height:20px;font-size:11px;color:#000;font-weight:bold;white-space:pre;">TRAB</div>
<div style="position:absolute;left:199.5px;top:385.0px;width:90px;text-align:center;line-height:20px;height:20px;font-size:11px;color:#000;font-weight:bold;white-space:pre;">AJO</div>
<div style="position:absolute;left:260.0px;top:347.5px;width:90px;text-align:center;line-height:20px;height:20px;font-size:11px;color:#000;font-weight:bold;white-space:pre;">SUELDO X</div>
<div style="position:absolute;left:260.0px;top:362.0px;width:90px;text-align:center;line-height:20px;height:20px;font-size:11px;color:#000;font-weight:bold;white-space:pre;">MES</div>
<div style="position:absolute;left:324.0px;top:325.5px;width:90px;text-align:center;line-height:20px;height:20px;font-size:11px;color:#000;font-weight:bold;white-space:pre;">%</div>
<div style="position:absolute;left:324.0px;top:340.4px;width:90px;text-align:center;line-height:20px;height:20px;font-size:11px;color:#000;font-weight:bold;white-space:pre;">APORT</div>
<div style="position:absolute;left:324.0px;top:355.3px;width:90px;text-align:center;line-height:20px;height:20px;font-size:11px;color:#000;font-weight:bold;white-space:pre;">E</div>
<div style="position:absolute;left:324.0px;top:370.2px;width:90px;text-align:center;line-height:20px;height:20px;font-size:11px;color:#000;font-weight:bold;white-space:pre;">PERSO</div>
<div style="position:absolute;left:324.0px;top:385.1px;width:90px;text-align:center;line-height:20px;height:20px;font-size:11px;color:#000;font-weight:bold;white-space:pre;">NAL</div>
<div style="position:absolute;left:385.0px;top:340.2px;width:90px;text-align:center;line-height:20px;height:20px;font-size:11px;color:#000;font-weight:bold;white-space:pre;">VALOR</div>
<div style="position:absolute;left:385.0px;top:355.09999999999997px;width:90px;text-align:center;line-height:20px;height:20px;font-size:11px;color:#000;font-weight:bold;white-space:pre;">APORTE</div>
<div style="position:absolute;left:385.0px;top:370.0px;width:90px;text-align:center;line-height:20px;height:20px;font-size:11px;color:#000;font-weight:bold;white-space:pre;">PERSONAL</div>
<div style="position:absolute;left:457.5px;top:347.5px;width:90px;text-align:center;line-height:20px;height:20px;font-size:11px;color:#000;font-weight:bold;white-space:pre;">PRÉSTAMO</div>
<div style="position:absolute;left:457.5px;top:362.0px;width:90px;text-align:center;line-height:20px;height:20px;font-size:11px;color:#000;font-weight:bold;white-space:pre;">IESS</div>
<div style="position:absolute;left:528.5px;top:340.2px;width:90px;text-align:center;line-height:20px;height:20px;font-size:11px;color:#000;font-weight:bold;white-space:pre;">FONDOS</div>
<div style="position:absolute;left:528.5px;top:355.09999999999997px;width:90px;text-align:center;line-height:20px;height:20px;font-size:11px;color:#000;font-weight:bold;white-space:pre;">DE</div>
<div style="position:absolute;left:528.5px;top:370.0px;width:90px;text-align:center;line-height:20px;height:20px;font-size:11px;color:#000;font-weight:bold;white-space:pre;">RESERVA</div>
<div style="position:absolute;left:599.0px;top:340.2px;width:90px;text-align:center;line-height:20px;height:20px;font-size:11px;color:#000;font-weight:bold;white-space:pre;">DÉCIMO</div>
<div style="position:absolute;left:599.0px;top:355.09999999999997px;width:90px;text-align:center;line-height:20px;height:20px;font-size:11px;color:#000;font-weight:bold;white-space:pre;">TERCER</div>
<div style="position:absolute;left:599.0px;top:370.0px;width:90px;text-align:center;line-height:20px;height:20px;font-size:11px;color:#000;font-weight:bold;white-space:pre;">SUELDO</div>
<div style="position:absolute;left:665.0px;top:340.2px;width:90px;text-align:center;line-height:20px;height:20px;font-size:11px;color:#000;font-weight:bold;white-space:pre;">DÉCIMO</div>
<div style="position:absolute;left:665.0px;top:355.09999999999997px;width:90px;text-align:center;line-height:20px;height:20px;font-size:11px;color:#000;font-weight:bold;white-space:pre;">CUARTO</div>
<div style="position:absolute;left:665.0px;top:370.0px;width:90px;text-align:center;line-height:20px;height:20px;font-size:11px;color:#000;font-weight:bold;white-space:pre;">SUELDO</div>
<div style="position:absolute;left:731.0px;top:327.0px;width:90px;text-align:center;line-height:20px;height:20px;font-size:8.5px;color:#000;font-weight:bold;white-space:pre;letter-spacing:0.9px;">VACACIONES</div>
<div style="position:absolute;left:731.0px;top:338.0px;width:90px;text-align:center;line-height:20px;height:20px;font-size:8.5px;color:#000;font-weight:bold;white-space:pre;letter-spacing:0.9px;">NO GOZADAS</div>
<div style="position:absolute;left:731.0px;top:349.0px;width:90px;text-align:center;line-height:20px;height:20px;font-size:8.5px;color:#000;font-weight:bold;white-space:pre;letter-spacing:0.9px;">POR</div>
<div style="position:absolute;left:731.0px;top:360.0px;width:90px;text-align:center;line-height:20px;height:20px;font-size:8.5px;color:#000;font-weight:bold;white-space:pre;letter-spacing:0.9px;">CESACIÒN</div>
<div style="position:absolute;left:731.0px;top:371.0px;width:90px;text-align:center;line-height:20px;height:20px;font-size:8.5px;color:#000;font-weight:bold;white-space:pre;letter-spacing:0.9px;">DE</div>
<div style="position:absolute;left:731.0px;top:382.0px;width:90px;text-align:center;line-height:20px;height:20px;font-size:8.5px;color:#000;font-weight:bold;white-space:pre;letter-spacing:0.9px;">FUNCIONES</div>
<div style="position:absolute;left:803.5px;top:355.0px;width:90px;text-align:center;line-height:20px;height:20px;font-size:11px;color:#000;font-weight:bold;white-space:pre;">ANTICIPO</div>
<div style="position:absolute;left:870.0px;top:355.0px;width:90px;text-align:center;line-height:20px;height:20px;font-size:11px;color:#000;font-weight:bold;white-space:pre;">CAUCIÓN</div>
<div style="position:absolute;left:941.0px;top:355.0px;width:90px;text-align:center;line-height:20px;height:20px;font-size:11px;color:#000;font-weight:bold;white-space:pre;">TOTAL</div>
<div style="position:absolute;left:23px;top:406.0px;line-height:20px;height:20px;font-size:10.75px;color:#000;font-weight:normal;white-space:pre;transform:scaleX(0.874);transform-origin:0 50%;">ENERO</div>
<div style="position:absolute;left:23px;top:426.0px;line-height:20px;height:20px;font-size:10.75px;color:#000;font-weight:normal;white-space:pre;transform:scaleX(0.874);transform-origin:0 50%;">FEBRERO</div>
<div style="position:absolute;left:23px;top:446.0px;line-height:20px;height:20px;font-size:10.75px;color:#000;font-weight:normal;white-space:pre;transform:scaleX(0.874);transform-origin:0 50%;">MARZO</div>
<div style="position:absolute;left:23px;top:466.0px;line-height:20px;height:20px;font-size:10.75px;color:#000;font-weight:normal;white-space:pre;transform:scaleX(0.874);transform-origin:0 50%;">ABRIL</div>
<div style="position:absolute;left:23px;top:486.0px;line-height:20px;height:20px;font-size:10.75px;color:#000;font-weight:normal;white-space:pre;transform:scaleX(0.874);transform-origin:0 50%;">MAYO</div>
<div style="position:absolute;left:23px;top:506.0px;line-height:20px;height:20px;font-size:10.75px;color:#000;font-weight:normal;white-space:pre;transform:scaleX(0.874);transform-origin:0 50%;">JUNIO</div>
<div style="position:absolute;left:23px;top:526.0px;line-height:20px;height:20px;font-size:10.75px;color:#000;font-weight:normal;white-space:pre;transform:scaleX(0.874);transform-origin:0 50%;">JULIO</div>
<div style="position:absolute;left:23px;top:546.0px;line-height:20px;height:20px;font-size:10.75px;color:#000;font-weight:normal;white-space:pre;transform:scaleX(0.874);transform-origin:0 50%;">AGOSTO</div>
<div style="position:absolute;left:23px;top:566.0px;line-height:20px;height:20px;font-size:10.75px;color:#000;font-weight:normal;white-space:pre;transform:scaleX(0.874);transform-origin:0 50%;">SEPTIEMBRE</div>
<div style="position:absolute;left:23px;top:586.0px;line-height:20px;height:20px;font-size:10.75px;color:#000;font-weight:normal;white-space:pre;transform:scaleX(0.874);transform-origin:0 50%;">OCTUBRE</div>
<div style="position:absolute;left:23px;top:606.0px;line-height:20px;height:20px;font-size:10.75px;color:#000;font-weight:normal;white-space:pre;transform:scaleX(0.874);transform-origin:0 50%;">NOVIEMBRE</div>
<div style="position:absolute;left:23px;top:626.0px;line-height:20px;height:20px;font-size:10.75px;color:#000;font-weight:normal;white-space:pre;transform:scaleX(0.874);transform-origin:0 50%;">DICIEMBRE</div>
<div style="position:absolute;left:89.0px;top:491.0px;width:70px;text-align:center;line-height:20px;height:20px;font-size:10.3px;color:#000;font-weight:normal;white-space:pre;transform:scaleX(0.97);">GARCÍA</div>
<div style="position:absolute;left:89.0px;top:507.0px;width:70px;text-align:center;line-height:20px;height:20px;font-size:10.3px;color:#000;font-weight:normal;white-space:pre;transform:scaleX(0.97);">CASANOVA</div>
<div style="position:absolute;left:89.0px;top:523.0px;width:70px;text-align:center;line-height:20px;height:20px;font-size:10.3px;color:#000;font-weight:normal;white-space:pre;transform:scaleX(0.97);">OSWALDO</div>
<div style="position:absolute;left:89.0px;top:539.0px;width:70px;text-align:center;line-height:20px;height:20px;font-size:10.3px;color:#000;font-weight:normal;white-space:pre;transform:scaleX(0.97);">GABRIEL</div>
<div style="position:absolute;left:117.0px;top:514px;width:100px;height:20px;line-height:20px;text-align:center;font-size:12.8px;color:#000;transform:rotate(-90deg);">1309511424</div>
<div style="position:absolute;left:180.5px;top:420.5px;width:40px;text-align:center;line-height:20px;height:20px;font-size:12.5px;color:#000;font-weight:bold;white-space:pre;">P</div>
<div style="position:absolute;left:180.5px;top:441.4px;width:40px;text-align:center;line-height:20px;height:20px;font-size:12.5px;color:#000;font-weight:bold;white-space:pre;">R</div>
<div style="position:absolute;left:180.5px;top:462.3px;width:40px;text-align:center;line-height:20px;height:20px;font-size:12.5px;color:#000;font-weight:bold;white-space:pre;">E</div>
<div style="position:absolute;left:180.5px;top:483.2px;width:40px;text-align:center;line-height:20px;height:20px;font-size:12.5px;color:#000;font-weight:bold;white-space:pre;">S</div>
<div style="position:absolute;left:180.5px;top:504.1px;width:40px;text-align:center;line-height:20px;height:20px;font-size:12.5px;color:#000;font-weight:bold;white-space:pre;">I</div>
<div style="position:absolute;left:180.5px;top:525.0px;width:40px;text-align:center;line-height:20px;height:20px;font-size:12.5px;color:#000;font-weight:bold;white-space:pre;">D</div>
<div style="position:absolute;left:180.5px;top:545.9px;width:40px;text-align:center;line-height:20px;height:20px;font-size:12.5px;color:#000;font-weight:bold;white-space:pre;">E</div>
<div style="position:absolute;left:180.5px;top:566.8px;width:40px;text-align:center;line-height:20px;height:20px;font-size:12.5px;color:#000;font-weight:bold;white-space:pre;">N</div>
<div style="position:absolute;left:180.5px;top:587.7px;width:40px;text-align:center;line-height:20px;height:20px;font-size:12.5px;color:#000;font-weight:bold;white-space:pre;">T</div>
<div style="position:absolute;left:180.5px;top:608.6px;width:40px;text-align:center;line-height:20px;height:20px;font-size:12.5px;color:#000;font-weight:bold;white-space:pre;">E</div>
<div style="position:absolute;left:214.5px;top:462.5px;width:60px;text-align:center;line-height:20px;height:20px;font-size:11.3px;color:#000;font-weight:normal;white-space:pre;transform:scaleX(0.83);">LEY</div>
<div style="position:absolute;left:214.5px;top:477.4px;width:60px;text-align:center;line-height:20px;height:20px;font-size:11.3px;color:#000;font-weight:normal;white-space:pre;transform:scaleX(0.83);">ORGÁN</div>
<div style="position:absolute;left:214.5px;top:492.3px;width:60px;text-align:center;line-height:20px;height:20px;font-size:11.3px;color:#000;font-weight:normal;white-space:pre;transform:scaleX(0.83);">ICA DEL</div>
<div style="position:absolute;left:214.5px;top:507.20000000000005px;width:60px;text-align:center;line-height:20px;height:20px;font-size:11.3px;color:#000;font-weight:normal;white-space:pre;transform:scaleX(0.83);">SERVIC</div>
<div style="position:absolute;left:214.5px;top:522.1px;width:60px;text-align:center;line-height:20px;height:20px;font-size:11.3px;color:#000;font-weight:normal;white-space:pre;transform:scaleX(0.83);">IO</div>
<div style="position:absolute;left:214.5px;top:537.0px;width:60px;text-align:center;line-height:20px;height:20px;font-size:11.3px;color:#000;font-weight:normal;white-space:pre;transform:scaleX(0.83);">PÚBLIC</div>
<div style="position:absolute;left:214.5px;top:551.9px;width:60px;text-align:center;line-height:20px;height:20px;font-size:11.3px;color:#000;font-weight:normal;white-space:pre;transform:scaleX(0.83);">O -</div>
<div style="position:absolute;left:214.5px;top:566.8px;width:60px;text-align:center;line-height:20px;height:20px;font-size:11.3px;color:#000;font-weight:normal;white-space:pre;transform:scaleX(0.83);">LOSEP</div>
<div style="position:absolute;left:176.5px;top:646.0px;width:90px;text-align:center;line-height:20px;height:20px;font-size:11.1px;color:#000;font-weight:normal;white-space:pre;">TOTALES...</div>
<div style="position:absolute;left:272px;top:406.0px;line-height:20px;height:20px;font-size:12px;color:#000;font-weight:normal;white-space:pre;">$</div>
<div style="position:absolute;left:248px;top:406.0px;width:90px;text-align:right;line-height:20px;height:20px;font-size:12px;color:#000;font-weight:normal;white-space:pre;">1,210.00</div>
<div style="position:absolute;left:400px;top:406.0px;line-height:20px;height:20px;font-size:12px;color:#000;font-weight:normal;white-space:pre;">$</div>
<div style="position:absolute;left:370px;top:406.0px;width:90px;text-align:right;line-height:20px;height:20px;font-size:12px;color:#000;font-weight:normal;white-space:pre;">138.55</div>
<div style="position:absolute;left:473px;top:406.0px;line-height:20px;height:20px;font-size:12px;color:#000;font-weight:normal;white-space:pre;">$</div>
<div style="position:absolute;left:514px;top:406.0px;line-height:20px;height:20px;font-size:12px;color:#000;font-weight:normal;white-space:pre;">-</div>
<div style="position:absolute;left:545px;top:406.0px;line-height:20px;height:20px;font-size:12px;color:#000;font-weight:normal;white-space:pre;">$</div>
<div style="position:absolute;left:584px;top:406.0px;line-height:20px;height:20px;font-size:12px;color:#000;font-weight:normal;white-space:pre;">-</div>
<div style="position:absolute;left:615px;top:406.0px;line-height:20px;height:20px;font-size:12px;color:#000;font-weight:normal;white-space:pre;">$</div>
<div style="position:absolute;left:655px;top:406.0px;line-height:20px;height:20px;font-size:12px;color:#000;font-weight:normal;white-space:pre;">-</div>
<div style="position:absolute;left:686px;top:406.0px;line-height:20px;height:20px;font-size:12px;color:#000;font-weight:normal;white-space:pre;">$</div>
<div style="position:absolute;left:716px;top:406.0px;line-height:20px;height:20px;font-size:12px;color:#000;font-weight:normal;white-space:pre;">-</div>
<div style="position:absolute;left:747px;top:406.0px;line-height:20px;height:20px;font-size:12px;color:#000;font-weight:normal;white-space:pre;">$</div>
<div style="position:absolute;left:787px;top:406.0px;line-height:20px;height:20px;font-size:12px;color:#000;font-weight:normal;white-space:pre;">-</div>
<div style="position:absolute;left:818px;top:406.0px;line-height:20px;height:20px;font-size:12px;color:#000;font-weight:normal;white-space:pre;">$</div>
<div style="position:absolute;left:861px;top:406.0px;line-height:20px;height:20px;font-size:12px;color:#000;font-weight:normal;white-space:pre;">-</div>
<div style="position:absolute;left:892px;top:406.0px;line-height:20px;height:20px;font-size:12px;color:#000;font-weight:normal;white-space:pre;">$</div>
<div style="position:absolute;left:920px;top:406.0px;line-height:20px;height:20px;font-size:12px;color:#000;font-weight:normal;white-space:pre;">-</div>
<div style="position:absolute;left:951px;top:406.0px;line-height:20px;height:20px;font-size:12px;color:#000;font-weight:bold;white-space:pre;">$</div>
<div style="position:absolute;left:931px;top:406.0px;width:90px;text-align:right;line-height:20px;height:20px;font-size:12px;color:#000;font-weight:bold;white-space:pre;">1,071.46</div>
<div style="position:absolute;left:331px;top:406.0px;width:60px;text-align:right;line-height:20px;height:20px;font-size:12px;color:#000;font-weight:normal;white-space:pre;">11.45%</div>
<div style="position:absolute;left:272px;top:426.0px;line-height:20px;height:20px;font-size:12px;color:#000;font-weight:normal;white-space:pre;">$</div>
<div style="position:absolute;left:248px;top:426.0px;width:90px;text-align:right;line-height:20px;height:20px;font-size:12px;color:#000;font-weight:normal;white-space:pre;">1,210.00</div>
<div style="position:absolute;left:400px;top:426.0px;line-height:20px;height:20px;font-size:12px;color:#000;font-weight:normal;white-space:pre;">$</div>
<div style="position:absolute;left:370px;top:426.0px;width:90px;text-align:right;line-height:20px;height:20px;font-size:12px;color:#000;font-weight:normal;white-space:pre;">138.55</div>
<div style="position:absolute;left:473px;top:426.0px;line-height:20px;height:20px;font-size:12px;color:#000;font-weight:normal;white-space:pre;">$</div>
<div style="position:absolute;left:514px;top:426.0px;line-height:20px;height:20px;font-size:12px;color:#000;font-weight:normal;white-space:pre;">-</div>
<div style="position:absolute;left:545px;top:426.0px;line-height:20px;height:20px;font-size:12px;color:#000;font-weight:normal;white-space:pre;">$</div>
<div style="position:absolute;left:584px;top:426.0px;line-height:20px;height:20px;font-size:12px;color:#000;font-weight:normal;white-space:pre;">-</div>
<div style="position:absolute;left:615px;top:426.0px;line-height:20px;height:20px;font-size:12px;color:#000;font-weight:normal;white-space:pre;">$</div>
<div style="position:absolute;left:655px;top:426.0px;line-height:20px;height:20px;font-size:12px;color:#000;font-weight:normal;white-space:pre;">-</div>
<div style="position:absolute;left:686px;top:426.0px;line-height:20px;height:20px;font-size:12px;color:#000;font-weight:normal;white-space:pre;">$</div>
<div style="position:absolute;left:716px;top:426.0px;line-height:20px;height:20px;font-size:12px;color:#000;font-weight:normal;white-space:pre;">-</div>
<div style="position:absolute;left:747px;top:426.0px;line-height:20px;height:20px;font-size:12px;color:#000;font-weight:normal;white-space:pre;">$</div>
<div style="position:absolute;left:787px;top:426.0px;line-height:20px;height:20px;font-size:12px;color:#000;font-weight:normal;white-space:pre;">-</div>
<div style="position:absolute;left:818px;top:426.0px;line-height:20px;height:20px;font-size:12px;color:#000;font-weight:normal;white-space:pre;">$</div>
<div style="position:absolute;left:861px;top:426.0px;line-height:20px;height:20px;font-size:12px;color:#000;font-weight:normal;white-space:pre;">-</div>
<div style="position:absolute;left:892px;top:426.0px;line-height:20px;height:20px;font-size:12px;color:#000;font-weight:normal;white-space:pre;">$</div>
<div style="position:absolute;left:920px;top:426.0px;line-height:20px;height:20px;font-size:12px;color:#000;font-weight:normal;white-space:pre;">-</div>
<div style="position:absolute;left:951px;top:426.0px;line-height:20px;height:20px;font-size:12px;color:#000;font-weight:bold;white-space:pre;">$</div>
<div style="position:absolute;left:931px;top:426.0px;width:90px;text-align:right;line-height:20px;height:20px;font-size:12px;color:#000;font-weight:bold;white-space:pre;">1,071.46</div>
<div style="position:absolute;left:331px;top:426.0px;width:60px;text-align:right;line-height:20px;height:20px;font-size:12px;color:#000;font-weight:normal;white-space:pre;">11.45%</div>
<div style="position:absolute;left:272px;top:446.0px;line-height:20px;height:20px;font-size:12px;color:#000;font-weight:normal;white-space:pre;">$</div>
<div style="position:absolute;left:248px;top:446.0px;width:90px;text-align:right;line-height:20px;height:20px;font-size:12px;color:#000;font-weight:normal;white-space:pre;">1,210.00</div>
<div style="position:absolute;left:400px;top:446.0px;line-height:20px;height:20px;font-size:12px;color:#000;font-weight:normal;white-space:pre;">$</div>
<div style="position:absolute;left:370px;top:446.0px;width:90px;text-align:right;line-height:20px;height:20px;font-size:12px;color:#000;font-weight:normal;white-space:pre;">138.55</div>
<div style="position:absolute;left:473px;top:446.0px;line-height:20px;height:20px;font-size:12px;color:#000;font-weight:normal;white-space:pre;">$</div>
<div style="position:absolute;left:514px;top:446.0px;line-height:20px;height:20px;font-size:12px;color:#000;font-weight:normal;white-space:pre;">-</div>
<div style="position:absolute;left:545px;top:446.0px;line-height:20px;height:20px;font-size:12px;color:#000;font-weight:normal;white-space:pre;">$</div>
<div style="position:absolute;left:584px;top:446.0px;line-height:20px;height:20px;font-size:12px;color:#000;font-weight:normal;white-space:pre;">-</div>
<div style="position:absolute;left:615px;top:446.0px;line-height:20px;height:20px;font-size:12px;color:#000;font-weight:normal;white-space:pre;">$</div>
<div style="position:absolute;left:655px;top:446.0px;line-height:20px;height:20px;font-size:12px;color:#000;font-weight:normal;white-space:pre;">-</div>
<div style="position:absolute;left:686px;top:446.0px;line-height:20px;height:20px;font-size:12px;color:#000;font-weight:normal;white-space:pre;">$</div>
<div style="position:absolute;left:644px;top:446.0px;width:90px;text-align:right;line-height:20px;height:20px;font-size:12px;color:#000;font-weight:normal;white-space:pre;">317.78</div>
<div style="position:absolute;left:747px;top:446.0px;line-height:20px;height:20px;font-size:12px;color:#000;font-weight:normal;white-space:pre;">$</div>
<div style="position:absolute;left:787px;top:446.0px;line-height:20px;height:20px;font-size:12px;color:#000;font-weight:normal;white-space:pre;">-</div>
<div style="position:absolute;left:818px;top:446.0px;line-height:20px;height:20px;font-size:12px;color:#000;font-weight:normal;white-space:pre;">$</div>
<div style="position:absolute;left:861px;top:446.0px;line-height:20px;height:20px;font-size:12px;color:#000;font-weight:normal;white-space:pre;">-</div>
<div style="position:absolute;left:892px;top:446.0px;line-height:20px;height:20px;font-size:12px;color:#000;font-weight:normal;white-space:pre;">$</div>
<div style="position:absolute;left:848px;top:446.0px;width:90px;text-align:right;line-height:20px;height:20px;font-size:12px;color:#000;font-weight:normal;white-space:pre;">7.76</div>
<div style="position:absolute;left:951px;top:446.0px;line-height:20px;height:20px;font-size:12px;color:#000;font-weight:bold;white-space:pre;">$</div>
<div style="position:absolute;left:931px;top:446.0px;width:90px;text-align:right;line-height:20px;height:20px;font-size:12px;color:#000;font-weight:bold;white-space:pre;">1,381.48</div>
<div style="position:absolute;left:331px;top:446.0px;width:60px;text-align:right;line-height:20px;height:20px;font-size:12px;color:#000;font-weight:normal;white-space:pre;">11.45%</div>
<div style="position:absolute;left:272px;top:466.0px;line-height:20px;height:20px;font-size:12px;color:#000;font-weight:normal;white-space:pre;">$</div>
<div style="position:absolute;left:248px;top:466.0px;width:90px;text-align:right;line-height:20px;height:20px;font-size:12px;color:#000;font-weight:normal;white-space:pre;">1,210.00</div>
<div style="position:absolute;left:400px;top:466.0px;line-height:20px;height:20px;font-size:12px;color:#000;font-weight:normal;white-space:pre;">$</div>
<div style="position:absolute;left:370px;top:466.0px;width:90px;text-align:right;line-height:20px;height:20px;font-size:12px;color:#000;font-weight:normal;white-space:pre;">138.55</div>
<div style="position:absolute;left:473px;top:466.0px;line-height:20px;height:20px;font-size:12px;color:#000;font-weight:normal;white-space:pre;">$</div>
<div style="position:absolute;left:514px;top:466.0px;line-height:20px;height:20px;font-size:12px;color:#000;font-weight:normal;white-space:pre;">-</div>
<div style="position:absolute;left:545px;top:466.0px;line-height:20px;height:20px;font-size:12px;color:#000;font-weight:normal;white-space:pre;">$</div>
<div style="position:absolute;left:584px;top:466.0px;line-height:20px;height:20px;font-size:12px;color:#000;font-weight:normal;white-space:pre;">-</div>
<div style="position:absolute;left:615px;top:466.0px;line-height:20px;height:20px;font-size:12px;color:#000;font-weight:normal;white-space:pre;">$</div>
<div style="position:absolute;left:655px;top:466.0px;line-height:20px;height:20px;font-size:12px;color:#000;font-weight:normal;white-space:pre;">-</div>
<div style="position:absolute;left:686px;top:466.0px;line-height:20px;height:20px;font-size:12px;color:#000;font-weight:normal;white-space:pre;">$</div>
<div style="position:absolute;left:716px;top:466.0px;line-height:20px;height:20px;font-size:12px;color:#000;font-weight:normal;white-space:pre;">-</div>
<div style="position:absolute;left:747px;top:466.0px;line-height:20px;height:20px;font-size:12px;color:#000;font-weight:normal;white-space:pre;">$</div>
<div style="position:absolute;left:787px;top:466.0px;line-height:20px;height:20px;font-size:12px;color:#000;font-weight:normal;white-space:pre;">-</div>
<div style="position:absolute;left:818px;top:466.0px;line-height:20px;height:20px;font-size:12px;color:#000;font-weight:normal;white-space:pre;">$</div>
<div style="position:absolute;left:861px;top:466.0px;line-height:20px;height:20px;font-size:12px;color:#000;font-weight:normal;white-space:pre;">-</div>
<div style="position:absolute;left:892px;top:466.0px;line-height:20px;height:20px;font-size:12px;color:#000;font-weight:normal;white-space:pre;">$</div>
<div style="position:absolute;left:920px;top:466.0px;line-height:20px;height:20px;font-size:12px;color:#000;font-weight:normal;white-space:pre;">-</div>
<div style="position:absolute;left:951px;top:466.0px;line-height:20px;height:20px;font-size:12px;color:#000;font-weight:bold;white-space:pre;">$</div>
<div style="position:absolute;left:931px;top:466.0px;width:90px;text-align:right;line-height:20px;height:20px;font-size:12px;color:#000;font-weight:bold;white-space:pre;">1,071.46</div>
<div style="position:absolute;left:331px;top:466.0px;width:60px;text-align:right;line-height:20px;height:20px;font-size:12px;color:#000;font-weight:normal;white-space:pre;">11.45%</div>
<div style="position:absolute;left:272px;top:486.0px;line-height:20px;height:20px;font-size:12px;color:#000;font-weight:normal;white-space:pre;">$</div>
<div style="position:absolute;left:248px;top:486.0px;width:90px;text-align:right;line-height:20px;height:20px;font-size:12px;color:#000;font-weight:normal;white-space:pre;">1,210.00</div>
<div style="position:absolute;left:400px;top:486.0px;line-height:20px;height:20px;font-size:12px;color:#000;font-weight:normal;white-space:pre;">$</div>
<div style="position:absolute;left:370px;top:486.0px;width:90px;text-align:right;line-height:20px;height:20px;font-size:12px;color:#000;font-weight:normal;white-space:pre;">138.55</div>
<div style="position:absolute;left:473px;top:486.0px;line-height:20px;height:20px;font-size:12px;color:#000;font-weight:normal;white-space:pre;">$</div>
<div style="position:absolute;left:514px;top:486.0px;line-height:20px;height:20px;font-size:12px;color:#000;font-weight:normal;white-space:pre;">-</div>
<div style="position:absolute;left:545px;top:486.0px;line-height:20px;height:20px;font-size:12px;color:#000;font-weight:normal;white-space:pre;">$</div>
<div style="position:absolute;left:512px;top:486.0px;width:90px;text-align:right;line-height:20px;height:20px;font-size:12px;color:#000;font-weight:normal;white-space:pre;">53.76</div>
<div style="position:absolute;left:615px;top:486.0px;line-height:20px;height:20px;font-size:12px;color:#000;font-weight:normal;white-space:pre;">$</div>
<div style="position:absolute;left:655px;top:486.0px;line-height:20px;height:20px;font-size:12px;color:#000;font-weight:normal;white-space:pre;">-</div>
<div style="position:absolute;left:686px;top:486.0px;line-height:20px;height:20px;font-size:12px;color:#000;font-weight:normal;white-space:pre;">$</div>
<div style="position:absolute;left:716px;top:486.0px;line-height:20px;height:20px;font-size:12px;color:#000;font-weight:normal;white-space:pre;">-</div>
<div style="position:absolute;left:747px;top:486.0px;line-height:20px;height:20px;font-size:12px;color:#000;font-weight:normal;white-space:pre;">$</div>
<div style="position:absolute;left:787px;top:486.0px;line-height:20px;height:20px;font-size:12px;color:#000;font-weight:normal;white-space:pre;">-</div>
<div style="position:absolute;left:818px;top:486.0px;line-height:20px;height:20px;font-size:12px;color:#000;font-weight:normal;white-space:pre;">$</div>
<div style="position:absolute;left:861px;top:486.0px;line-height:20px;height:20px;font-size:12px;color:#000;font-weight:normal;white-space:pre;">-</div>
<div style="position:absolute;left:892px;top:486.0px;line-height:20px;height:20px;font-size:12px;color:#000;font-weight:normal;white-space:pre;">$</div>
<div style="position:absolute;left:920px;top:486.0px;line-height:20px;height:20px;font-size:12px;color:#000;font-weight:normal;white-space:pre;">-</div>
<div style="position:absolute;left:951px;top:486.0px;line-height:20px;height:20px;font-size:12px;color:#000;font-weight:bold;white-space:pre;">$</div>
<div style="position:absolute;left:931px;top:486.0px;width:90px;text-align:right;line-height:20px;height:20px;font-size:12px;color:#000;font-weight:bold;white-space:pre;">1,125.22</div>
<div style="position:absolute;left:331px;top:486.0px;width:60px;text-align:right;line-height:20px;height:20px;font-size:12px;color:#000;font-weight:normal;white-space:pre;">11.45%</div>
<div style="position:absolute;left:272px;top:506.0px;line-height:20px;height:20px;font-size:12px;color:#000;font-weight:normal;white-space:pre;">$</div>
<div style="position:absolute;left:248px;top:506.0px;width:90px;text-align:right;line-height:20px;height:20px;font-size:12px;color:#000;font-weight:normal;white-space:pre;">1,210.00</div>
<div style="position:absolute;left:400px;top:506.0px;line-height:20px;height:20px;font-size:12px;color:#000;font-weight:normal;white-space:pre;">$</div>
<div style="position:absolute;left:370px;top:506.0px;width:90px;text-align:right;line-height:20px;height:20px;font-size:12px;color:#000;font-weight:normal;white-space:pre;">138.55</div>
<div style="position:absolute;left:473px;top:506.0px;line-height:20px;height:20px;font-size:12px;color:#000;font-weight:normal;white-space:pre;">$</div>
<div style="position:absolute;left:514px;top:506.0px;line-height:20px;height:20px;font-size:12px;color:#000;font-weight:normal;white-space:pre;">-</div>
<div style="position:absolute;left:545px;top:506.0px;line-height:20px;height:20px;font-size:12px;color:#000;font-weight:normal;white-space:pre;">$</div>
<div style="position:absolute;left:512px;top:506.0px;width:90px;text-align:right;line-height:20px;height:20px;font-size:12px;color:#000;font-weight:normal;white-space:pre;">100.79</div>
<div style="position:absolute;left:615px;top:506.0px;line-height:20px;height:20px;font-size:12px;color:#000;font-weight:normal;white-space:pre;">$</div>
<div style="position:absolute;left:655px;top:506.0px;line-height:20px;height:20px;font-size:12px;color:#000;font-weight:normal;white-space:pre;">-</div>
<div style="position:absolute;left:686px;top:506.0px;line-height:20px;height:20px;font-size:12px;color:#000;font-weight:normal;white-space:pre;">$</div>
<div style="position:absolute;left:716px;top:506.0px;line-height:20px;height:20px;font-size:12px;color:#000;font-weight:normal;white-space:pre;">-</div>
<div style="position:absolute;left:747px;top:506.0px;line-height:20px;height:20px;font-size:12px;color:#000;font-weight:normal;white-space:pre;">$</div>
<div style="position:absolute;left:787px;top:506.0px;line-height:20px;height:20px;font-size:12px;color:#000;font-weight:normal;white-space:pre;">-</div>
<div style="position:absolute;left:818px;top:506.0px;line-height:20px;height:20px;font-size:12px;color:#000;font-weight:normal;white-space:pre;">$</div>
<div style="position:absolute;left:861px;top:506.0px;line-height:20px;height:20px;font-size:12px;color:#000;font-weight:normal;white-space:pre;">-</div>
<div style="position:absolute;left:892px;top:506.0px;line-height:20px;height:20px;font-size:12px;color:#000;font-weight:normal;white-space:pre;">$</div>
<div style="position:absolute;left:920px;top:506.0px;line-height:20px;height:20px;font-size:12px;color:#000;font-weight:normal;white-space:pre;">-</div>
<div style="position:absolute;left:951px;top:506.0px;line-height:20px;height:20px;font-size:12px;color:#000;font-weight:bold;white-space:pre;">$</div>
<div style="position:absolute;left:931px;top:506.0px;width:90px;text-align:right;line-height:20px;height:20px;font-size:12px;color:#000;font-weight:bold;white-space:pre;">1,172.25</div>
<div style="position:absolute;left:331px;top:506.0px;width:60px;text-align:right;line-height:20px;height:20px;font-size:12px;color:#000;font-weight:normal;white-space:pre;">11.45%</div>
<div style="position:absolute;left:272px;top:526.0px;line-height:20px;height:20px;font-size:12px;color:#000;font-weight:normal;white-space:pre;">$</div>
<div style="position:absolute;left:248px;top:526.0px;width:90px;text-align:right;line-height:20px;height:20px;font-size:12px;color:#000;font-weight:normal;white-space:pre;">1,210.00</div>
<div style="position:absolute;left:400px;top:526.0px;line-height:20px;height:20px;font-size:12px;color:#000;font-weight:normal;white-space:pre;">$</div>
<div style="position:absolute;left:370px;top:526.0px;width:90px;text-align:right;line-height:20px;height:20px;font-size:12px;color:#000;font-weight:normal;white-space:pre;">138.55</div>
<div style="position:absolute;left:473px;top:526.0px;line-height:20px;height:20px;font-size:12px;color:#000;font-weight:normal;white-space:pre;">$</div>
<div style="position:absolute;left:514px;top:526.0px;line-height:20px;height:20px;font-size:12px;color:#000;font-weight:normal;white-space:pre;">-</div>
<div style="position:absolute;left:545px;top:526.0px;line-height:20px;height:20px;font-size:12px;color:#000;font-weight:normal;white-space:pre;">$</div>
<div style="position:absolute;left:512px;top:526.0px;width:90px;text-align:right;line-height:20px;height:20px;font-size:12px;color:#000;font-weight:normal;white-space:pre;">100.79</div>
<div style="position:absolute;left:615px;top:526.0px;line-height:20px;height:20px;font-size:12px;color:#000;font-weight:normal;white-space:pre;">$</div>
<div style="position:absolute;left:655px;top:526.0px;line-height:20px;height:20px;font-size:12px;color:#000;font-weight:normal;white-space:pre;">-</div>
<div style="position:absolute;left:686px;top:526.0px;line-height:20px;height:20px;font-size:12px;color:#000;font-weight:normal;white-space:pre;">$</div>
<div style="position:absolute;left:716px;top:526.0px;line-height:20px;height:20px;font-size:12px;color:#000;font-weight:normal;white-space:pre;">-</div>
<div style="position:absolute;left:747px;top:526.0px;line-height:20px;height:20px;font-size:12px;color:#000;font-weight:normal;white-space:pre;">$</div>
<div style="position:absolute;left:787px;top:526.0px;line-height:20px;height:20px;font-size:12px;color:#000;font-weight:normal;white-space:pre;">-</div>
<div style="position:absolute;left:818px;top:526.0px;line-height:20px;height:20px;font-size:12px;color:#000;font-weight:normal;white-space:pre;">$</div>
<div style="position:absolute;left:861px;top:526.0px;line-height:20px;height:20px;font-size:12px;color:#000;font-weight:normal;white-space:pre;">-</div>
<div style="position:absolute;left:892px;top:526.0px;line-height:20px;height:20px;font-size:12px;color:#000;font-weight:normal;white-space:pre;">$</div>
<div style="position:absolute;left:920px;top:526.0px;line-height:20px;height:20px;font-size:12px;color:#000;font-weight:normal;white-space:pre;">-</div>
<div style="position:absolute;left:951px;top:526.0px;line-height:20px;height:20px;font-size:12px;color:#000;font-weight:bold;white-space:pre;">$</div>
<div style="position:absolute;left:931px;top:526.0px;width:90px;text-align:right;line-height:20px;height:20px;font-size:12px;color:#000;font-weight:bold;white-space:pre;">1,172.25</div>
<div style="position:absolute;left:331px;top:526.0px;width:60px;text-align:right;line-height:20px;height:20px;font-size:12px;color:#000;font-weight:normal;white-space:pre;">11.45%</div>
<div style="position:absolute;left:272px;top:546.0px;line-height:20px;height:20px;font-size:12px;color:#000;font-weight:normal;white-space:pre;">$</div>
<div style="position:absolute;left:248px;top:546.0px;width:90px;text-align:right;line-height:20px;height:20px;font-size:12px;color:#000;font-weight:normal;white-space:pre;">1,210.00</div>
<div style="position:absolute;left:400px;top:546.0px;line-height:20px;height:20px;font-size:12px;color:#000;font-weight:normal;white-space:pre;">$</div>
<div style="position:absolute;left:370px;top:546.0px;width:90px;text-align:right;line-height:20px;height:20px;font-size:12px;color:#000;font-weight:normal;white-space:pre;">138.55</div>
<div style="position:absolute;left:473px;top:546.0px;line-height:20px;height:20px;font-size:12px;color:#000;font-weight:normal;white-space:pre;">$</div>
<div style="position:absolute;left:514px;top:546.0px;line-height:20px;height:20px;font-size:12px;color:#000;font-weight:normal;white-space:pre;">-</div>
<div style="position:absolute;left:545px;top:546.0px;line-height:20px;height:20px;font-size:12px;color:#000;font-weight:normal;white-space:pre;">$</div>
<div style="position:absolute;left:512px;top:546.0px;width:90px;text-align:right;line-height:20px;height:20px;font-size:12px;color:#000;font-weight:normal;white-space:pre;">100.79</div>
<div style="position:absolute;left:615px;top:546.0px;line-height:20px;height:20px;font-size:12px;color:#000;font-weight:normal;white-space:pre;">$</div>
<div style="position:absolute;left:655px;top:546.0px;line-height:20px;height:20px;font-size:12px;color:#000;font-weight:normal;white-space:pre;">-</div>
<div style="position:absolute;left:686px;top:546.0px;line-height:20px;height:20px;font-size:12px;color:#000;font-weight:normal;white-space:pre;">$</div>
<div style="position:absolute;left:716px;top:546.0px;line-height:20px;height:20px;font-size:12px;color:#000;font-weight:normal;white-space:pre;">-</div>
<div style="position:absolute;left:747px;top:546.0px;line-height:20px;height:20px;font-size:12px;color:#000;font-weight:normal;white-space:pre;">$</div>
<div style="position:absolute;left:787px;top:546.0px;line-height:20px;height:20px;font-size:12px;color:#000;font-weight:normal;white-space:pre;">-</div>
<div style="position:absolute;left:818px;top:546.0px;line-height:20px;height:20px;font-size:12px;color:#000;font-weight:normal;white-space:pre;">$</div>
<div style="position:absolute;left:861px;top:546.0px;line-height:20px;height:20px;font-size:12px;color:#000;font-weight:normal;white-space:pre;">-</div>
<div style="position:absolute;left:892px;top:546.0px;line-height:20px;height:20px;font-size:12px;color:#000;font-weight:normal;white-space:pre;">$</div>
<div style="position:absolute;left:920px;top:546.0px;line-height:20px;height:20px;font-size:12px;color:#000;font-weight:normal;white-space:pre;">-</div>
<div style="position:absolute;left:951px;top:546.0px;line-height:20px;height:20px;font-size:12px;color:#000;font-weight:bold;white-space:pre;">$</div>
<div style="position:absolute;left:931px;top:546.0px;width:90px;text-align:right;line-height:20px;height:20px;font-size:12px;color:#000;font-weight:bold;white-space:pre;">1,172.25</div>
<div style="position:absolute;left:331px;top:546.0px;width:60px;text-align:right;line-height:20px;height:20px;font-size:12px;color:#000;font-weight:normal;white-space:pre;">11.45%</div>
<div style="position:absolute;left:272px;top:566.0px;line-height:20px;height:20px;font-size:12px;color:#000;font-weight:normal;white-space:pre;">$</div>
<div style="position:absolute;left:248px;top:566.0px;width:90px;text-align:right;line-height:20px;height:20px;font-size:12px;color:#000;font-weight:normal;white-space:pre;">1,210.00</div>
<div style="position:absolute;left:400px;top:566.0px;line-height:20px;height:20px;font-size:12px;color:#000;font-weight:normal;white-space:pre;">$</div>
<div style="position:absolute;left:370px;top:566.0px;width:90px;text-align:right;line-height:20px;height:20px;font-size:12px;color:#000;font-weight:normal;white-space:pre;">138.55</div>
<div style="position:absolute;left:473px;top:566.0px;line-height:20px;height:20px;font-size:12px;color:#000;font-weight:normal;white-space:pre;">$</div>
<div style="position:absolute;left:514px;top:566.0px;line-height:20px;height:20px;font-size:12px;color:#000;font-weight:normal;white-space:pre;">-</div>
<div style="position:absolute;left:545px;top:566.0px;line-height:20px;height:20px;font-size:12px;color:#000;font-weight:normal;white-space:pre;">$</div>
<div style="position:absolute;left:512px;top:566.0px;width:90px;text-align:right;line-height:20px;height:20px;font-size:12px;color:#000;font-weight:normal;white-space:pre;">100.79</div>
<div style="position:absolute;left:615px;top:566.0px;line-height:20px;height:20px;font-size:12px;color:#000;font-weight:normal;white-space:pre;">$</div>
<div style="position:absolute;left:655px;top:566.0px;line-height:20px;height:20px;font-size:12px;color:#000;font-weight:normal;white-space:pre;">-</div>
<div style="position:absolute;left:686px;top:566.0px;line-height:20px;height:20px;font-size:12px;color:#000;font-weight:normal;white-space:pre;">$</div>
<div style="position:absolute;left:716px;top:566.0px;line-height:20px;height:20px;font-size:12px;color:#000;font-weight:normal;white-space:pre;">-</div>
<div style="position:absolute;left:747px;top:566.0px;line-height:20px;height:20px;font-size:12px;color:#000;font-weight:normal;white-space:pre;">$</div>
<div style="position:absolute;left:787px;top:566.0px;line-height:20px;height:20px;font-size:12px;color:#000;font-weight:normal;white-space:pre;">-</div>
<div style="position:absolute;left:818px;top:566.0px;line-height:20px;height:20px;font-size:12px;color:#000;font-weight:normal;white-space:pre;">$</div>
<div style="position:absolute;left:861px;top:566.0px;line-height:20px;height:20px;font-size:12px;color:#000;font-weight:normal;white-space:pre;">-</div>
<div style="position:absolute;left:892px;top:566.0px;line-height:20px;height:20px;font-size:12px;color:#000;font-weight:normal;white-space:pre;">$</div>
<div style="position:absolute;left:920px;top:566.0px;line-height:20px;height:20px;font-size:12px;color:#000;font-weight:normal;white-space:pre;">-</div>
<div style="position:absolute;left:951px;top:566.0px;line-height:20px;height:20px;font-size:12px;color:#000;font-weight:bold;white-space:pre;">$</div>
<div style="position:absolute;left:931px;top:566.0px;width:90px;text-align:right;line-height:20px;height:20px;font-size:12px;color:#000;font-weight:bold;white-space:pre;">1,172.25</div>
<div style="position:absolute;left:331px;top:566.0px;width:60px;text-align:right;line-height:20px;height:20px;font-size:12px;color:#000;font-weight:normal;white-space:pre;">11.45%</div>
<div style="position:absolute;left:272px;top:586.0px;line-height:20px;height:20px;font-size:12px;color:#000;font-weight:normal;white-space:pre;">$</div>
<div style="position:absolute;left:248px;top:586.0px;width:90px;text-align:right;line-height:20px;height:20px;font-size:12px;color:#000;font-weight:normal;white-space:pre;">1,210.00</div>
<div style="position:absolute;left:400px;top:586.0px;line-height:20px;height:20px;font-size:12px;color:#000;font-weight:normal;white-space:pre;">$</div>
<div style="position:absolute;left:370px;top:586.0px;width:90px;text-align:right;line-height:20px;height:20px;font-size:12px;color:#000;font-weight:normal;white-space:pre;">138.55</div>
<div style="position:absolute;left:473px;top:586.0px;line-height:20px;height:20px;font-size:12px;color:#000;font-weight:normal;white-space:pre;">$</div>
<div style="position:absolute;left:514px;top:586.0px;line-height:20px;height:20px;font-size:12px;color:#000;font-weight:normal;white-space:pre;">-</div>
<div style="position:absolute;left:545px;top:586.0px;line-height:20px;height:20px;font-size:12px;color:#000;font-weight:normal;white-space:pre;">$</div>
<div style="position:absolute;left:512px;top:586.0px;width:90px;text-align:right;line-height:20px;height:20px;font-size:12px;color:#000;font-weight:normal;white-space:pre;">100.79</div>
<div style="position:absolute;left:615px;top:586.0px;line-height:20px;height:20px;font-size:12px;color:#000;font-weight:normal;white-space:pre;">$</div>
<div style="position:absolute;left:655px;top:586.0px;line-height:20px;height:20px;font-size:12px;color:#000;font-weight:normal;white-space:pre;">-</div>
<div style="position:absolute;left:686px;top:586.0px;line-height:20px;height:20px;font-size:12px;color:#000;font-weight:normal;white-space:pre;">$</div>
<div style="position:absolute;left:716px;top:586.0px;line-height:20px;height:20px;font-size:12px;color:#000;font-weight:normal;white-space:pre;">-</div>
<div style="position:absolute;left:747px;top:586.0px;line-height:20px;height:20px;font-size:12px;color:#000;font-weight:normal;white-space:pre;">$</div>
<div style="position:absolute;left:787px;top:586.0px;line-height:20px;height:20px;font-size:12px;color:#000;font-weight:normal;white-space:pre;">-</div>
<div style="position:absolute;left:818px;top:586.0px;line-height:20px;height:20px;font-size:12px;color:#000;font-weight:normal;white-space:pre;">$</div>
<div style="position:absolute;left:861px;top:586.0px;line-height:20px;height:20px;font-size:12px;color:#000;font-weight:normal;white-space:pre;">-</div>
<div style="position:absolute;left:892px;top:586.0px;line-height:20px;height:20px;font-size:12px;color:#000;font-weight:normal;white-space:pre;">$</div>
<div style="position:absolute;left:920px;top:586.0px;line-height:20px;height:20px;font-size:12px;color:#000;font-weight:normal;white-space:pre;">-</div>
<div style="position:absolute;left:951px;top:586.0px;line-height:20px;height:20px;font-size:12px;color:#000;font-weight:bold;white-space:pre;">$</div>
<div style="position:absolute;left:931px;top:586.0px;width:90px;text-align:right;line-height:20px;height:20px;font-size:12px;color:#000;font-weight:bold;white-space:pre;">1,172.25</div>
<div style="position:absolute;left:331px;top:586.0px;width:60px;text-align:right;line-height:20px;height:20px;font-size:12px;color:#000;font-weight:normal;white-space:pre;">11.45%</div>
<div style="position:absolute;left:272px;top:606.0px;line-height:20px;height:20px;font-size:12px;color:#000;font-weight:normal;white-space:pre;">$</div>
<div style="position:absolute;left:248px;top:606.0px;width:90px;text-align:right;line-height:20px;height:20px;font-size:12px;color:#000;font-weight:normal;white-space:pre;">1,210.00</div>
<div style="position:absolute;left:400px;top:606.0px;line-height:20px;height:20px;font-size:12px;color:#000;font-weight:normal;white-space:pre;">$</div>
<div style="position:absolute;left:370px;top:606.0px;width:90px;text-align:right;line-height:20px;height:20px;font-size:12px;color:#000;font-weight:normal;white-space:pre;">138.55</div>
<div style="position:absolute;left:473px;top:606.0px;line-height:20px;height:20px;font-size:12px;color:#000;font-weight:normal;white-space:pre;">$</div>
<div style="position:absolute;left:514px;top:606.0px;line-height:20px;height:20px;font-size:12px;color:#000;font-weight:normal;white-space:pre;">-</div>
<div style="position:absolute;left:545px;top:606.0px;line-height:20px;height:20px;font-size:12px;color:#000;font-weight:normal;white-space:pre;">$</div>
<div style="position:absolute;left:512px;top:606.0px;width:90px;text-align:right;line-height:20px;height:20px;font-size:12px;color:#000;font-weight:normal;white-space:pre;">100.79</div>
<div style="position:absolute;left:615px;top:606.0px;line-height:20px;height:20px;font-size:12px;color:#000;font-weight:normal;white-space:pre;">$</div>
<div style="position:absolute;left:655px;top:606.0px;line-height:20px;height:20px;font-size:12px;color:#000;font-weight:normal;white-space:pre;">-</div>
<div style="position:absolute;left:686px;top:606.0px;line-height:20px;height:20px;font-size:12px;color:#000;font-weight:normal;white-space:pre;">$</div>
<div style="position:absolute;left:716px;top:606.0px;line-height:20px;height:20px;font-size:12px;color:#000;font-weight:normal;white-space:pre;">-</div>
<div style="position:absolute;left:747px;top:606.0px;line-height:20px;height:20px;font-size:12px;color:#000;font-weight:normal;white-space:pre;">$</div>
<div style="position:absolute;left:787px;top:606.0px;line-height:20px;height:20px;font-size:12px;color:#000;font-weight:normal;white-space:pre;">-</div>
<div style="position:absolute;left:818px;top:606.0px;line-height:20px;height:20px;font-size:12px;color:#000;font-weight:normal;white-space:pre;">$</div>
<div style="position:absolute;left:861px;top:606.0px;line-height:20px;height:20px;font-size:12px;color:#000;font-weight:normal;white-space:pre;">-</div>
<div style="position:absolute;left:892px;top:606.0px;line-height:20px;height:20px;font-size:12px;color:#000;font-weight:normal;white-space:pre;">$</div>
<div style="position:absolute;left:920px;top:606.0px;line-height:20px;height:20px;font-size:12px;color:#000;font-weight:normal;white-space:pre;">-</div>
<div style="position:absolute;left:951px;top:606.0px;line-height:20px;height:20px;font-size:12px;color:#000;font-weight:bold;white-space:pre;">$</div>
<div style="position:absolute;left:931px;top:606.0px;width:90px;text-align:right;line-height:20px;height:20px;font-size:12px;color:#000;font-weight:bold;white-space:pre;">1,172.25</div>
<div style="position:absolute;left:331px;top:606.0px;width:60px;text-align:right;line-height:20px;height:20px;font-size:12px;color:#000;font-weight:normal;white-space:pre;">11.45%</div>
<div style="position:absolute;left:272px;top:626.0px;line-height:20px;height:20px;font-size:12px;color:#000;font-weight:normal;white-space:pre;">$</div>
<div style="position:absolute;left:248px;top:626.0px;width:90px;text-align:right;line-height:20px;height:20px;font-size:12px;color:#000;font-weight:normal;white-space:pre;">1,210.00</div>
<div style="position:absolute;left:400px;top:626.0px;line-height:20px;height:20px;font-size:12px;color:#000;font-weight:normal;white-space:pre;">$</div>
<div style="position:absolute;left:370px;top:626.0px;width:90px;text-align:right;line-height:20px;height:20px;font-size:12px;color:#000;font-weight:normal;white-space:pre;">138.55</div>
<div style="position:absolute;left:473px;top:626.0px;line-height:20px;height:20px;font-size:12px;color:#000;font-weight:normal;white-space:pre;">$</div>
<div style="position:absolute;left:514px;top:626.0px;line-height:20px;height:20px;font-size:12px;color:#000;font-weight:normal;white-space:pre;">-</div>
<div style="position:absolute;left:545px;top:626.0px;line-height:20px;height:20px;font-size:12px;color:#000;font-weight:normal;white-space:pre;">$</div>
<div style="position:absolute;left:512px;top:626.0px;width:90px;text-align:right;line-height:20px;height:20px;font-size:12px;color:#000;font-weight:normal;white-space:pre;">100.79</div>
<div style="position:absolute;left:615px;top:626.0px;line-height:20px;height:20px;font-size:12px;color:#000;font-weight:normal;white-space:pre;">$</div>
<div style="position:absolute;left:583px;top:626.0px;width:90px;text-align:right;line-height:20px;height:20px;font-size:12px;color:#000;font-weight:normal;white-space:pre;">1,210.00</div>
<div style="position:absolute;left:686px;top:626.0px;line-height:20px;height:20px;font-size:12px;color:#000;font-weight:normal;white-space:pre;">$</div>
<div style="position:absolute;left:716px;top:626.0px;line-height:20px;height:20px;font-size:12px;color:#000;font-weight:normal;white-space:pre;">-</div>
<div style="position:absolute;left:747px;top:626.0px;line-height:20px;height:20px;font-size:12px;color:#000;font-weight:normal;white-space:pre;">$</div>
<div style="position:absolute;left:787px;top:626.0px;line-height:20px;height:20px;font-size:12px;color:#000;font-weight:normal;white-space:pre;">-</div>
<div style="position:absolute;left:818px;top:626.0px;line-height:20px;height:20px;font-size:12px;color:#000;font-weight:normal;white-space:pre;">$</div>
<div style="position:absolute;left:861px;top:626.0px;line-height:20px;height:20px;font-size:12px;color:#000;font-weight:normal;white-space:pre;">-</div>
<div style="position:absolute;left:892px;top:626.0px;line-height:20px;height:20px;font-size:12px;color:#000;font-weight:normal;white-space:pre;">$</div>
<div style="position:absolute;left:920px;top:626.0px;line-height:20px;height:20px;font-size:12px;color:#000;font-weight:normal;white-space:pre;">-</div>
<div style="position:absolute;left:951px;top:626.0px;line-height:20px;height:20px;font-size:12px;color:#000;font-weight:bold;white-space:pre;">$</div>
<div style="position:absolute;left:931px;top:626.0px;width:90px;text-align:right;line-height:20px;height:20px;font-size:12px;color:#000;font-weight:bold;white-space:pre;">2,382.25</div>
<div style="position:absolute;left:331px;top:626.0px;width:60px;text-align:right;line-height:20px;height:20px;font-size:12px;color:#000;font-weight:normal;white-space:pre;">11.45%</div>
<div style="position:absolute;left:272px;top:646.5px;line-height:20px;height:20px;font-size:12px;color:#000;font-weight:normal;white-space:pre;">$</div>
<div style="position:absolute;left:248px;top:646.5px;width:90px;text-align:right;line-height:20px;height:20px;font-size:12px;color:#000;font-weight:normal;white-space:pre;">14,520.00</div>
<div style="position:absolute;left:400px;top:646.5px;line-height:20px;height:20px;font-size:12px;color:#000;font-weight:normal;white-space:pre;">$</div>
<div style="position:absolute;left:370px;top:646.5px;width:90px;text-align:right;line-height:20px;height:20px;font-size:12px;color:#000;font-weight:normal;white-space:pre;">1,662.54</div>
<div style="position:absolute;left:545px;top:646.5px;line-height:20px;height:20px;font-size:12px;color:#000;font-weight:normal;white-space:pre;">$</div>
<div style="position:absolute;left:512px;top:646.5px;width:90px;text-align:right;line-height:20px;height:20px;font-size:12px;color:#000;font-weight:normal;white-space:pre;">759.31</div>
<div style="position:absolute;left:615px;top:646.5px;line-height:20px;height:20px;font-size:12px;color:#000;font-weight:normal;white-space:pre;">$</div>
<div style="position:absolute;left:583px;top:646.5px;width:90px;text-align:right;line-height:20px;height:20px;font-size:12px;color:#000;font-weight:normal;white-space:pre;">1,210.00</div>
<div style="position:absolute;left:686px;top:646.5px;line-height:20px;height:20px;font-size:12px;color:#000;font-weight:normal;white-space:pre;">$</div>
<div style="position:absolute;left:644px;top:646.5px;width:90px;text-align:right;line-height:20px;height:20px;font-size:12px;color:#000;font-weight:normal;white-space:pre;">317.78</div>
<div style="position:absolute;left:747px;top:646.5px;line-height:20px;height:20px;font-size:12px;color:#000;font-weight:normal;white-space:pre;">$</div>
<div style="position:absolute;left:787px;top:646.5px;line-height:20px;height:20px;font-size:12px;color:#000;font-weight:normal;white-space:pre;">-</div>
<div style="position:absolute;left:818px;top:646.5px;line-height:20px;height:20px;font-size:12px;color:#000;font-weight:normal;white-space:pre;">$</div>
<div style="position:absolute;left:861px;top:646.5px;line-height:20px;height:20px;font-size:12px;color:#000;font-weight:normal;white-space:pre;">-</div>
<div style="position:absolute;left:892px;top:646.5px;line-height:20px;height:20px;font-size:12px;color:#000;font-weight:normal;white-space:pre;">$</div>
<div style="position:absolute;left:848px;top:646.5px;width:90px;text-align:right;line-height:20px;height:20px;font-size:12px;color:#000;font-weight:normal;white-space:pre;">7.76</div>
<div style="position:absolute;left:951px;top:646.5px;line-height:20px;height:20px;font-size:12px;color:#000;font-weight:bold;white-space:pre;">$</div>
<div style="position:absolute;left:931px;top:646.5px;width:90px;text-align:right;line-height:20px;height:20px;font-size:12px;color:#000;font-weight:bold;white-space:pre;">15,136.79</div>
<div style="position:absolute;left:1112.5px;top:646.5px;line-height:20px;height:20px;font-size:12px;color:#000;font-weight:normal;white-space:pre;">$ 14,527.76</div>
<div style="position:absolute;left:0px;top:675px;width:1361px;height:28px;background:#f3f3f3;"></div>
<div style="position:absolute;left:0px;top:675px;width:1339px;height:1px;background:#ababab;"></div>
<svg style="position:absolute;left:21px;top:685px;" width="5" height="8" viewBox="0 0 5 8"><path d="M5 0v8L0 4z" fill="#217346"/></svg>
<svg style="position:absolute;left:50px;top:685px;" width="5" height="8" viewBox="0 0 5 8"><path d="M0 0v8l5-4z" fill="#c6c6c6"/></svg>
<div style="position:absolute;left:75px;top:680.0px;line-height:20px;height:20px;font-size:13px;color:#217346;font-weight:bold;white-space:pre;">...</div>
<div style="position:absolute;left:95px;top:679px;width:1px;height:20px;background:#c6c6c6;"></div>
<div style="position:absolute;left:174px;top:679px;width:1px;height:20px;background:#c6c6c6;"></div>
<div style="position:absolute;left:245px;top:679px;width:1px;height:20px;background:#c6c6c6;"></div>
<div style="position:absolute;left:305px;top:679px;width:1px;height:20px;background:#c6c6c6;"></div>
<div style="position:absolute;left:368px;top:679px;width:1px;height:20px;background:#c6c6c6;"></div>
<div style="position:absolute;left:431px;top:679px;width:1px;height:20px;background:#c6c6c6;"></div>
<div style="position:absolute;left:491px;top:679px;width:1px;height:20px;background:#c6c6c6;"></div>
<div style="position:absolute;left:568px;top:679px;width:1px;height:20px;background:#c6c6c6;"></div>
<div style="position:absolute;left:668px;top:679px;width:1px;height:20px;background:#c6c6c6;"></div>
<div style="position:absolute;left:750px;top:679px;width:1px;height:20px;background:#c6c6c6;"></div>
<div style="position:absolute;left:849px;top:679px;width:1px;height:20px;background:#c6c6c6;"></div>
<div style="position:absolute;left:941px;top:679px;width:1px;height:20px;background:#c6c6c6;"></div>
<div style="position:absolute;left:108px;top:678.5px;line-height:20px;height:20px;font-size:10.75px;color:#444;font-weight:normal;white-space:pre;">FEBRERO</div>
<div style="position:absolute;left:187.5px;top:678.5px;line-height:20px;height:20px;font-size:11.6px;color:#444;font-weight:normal;white-space:pre;">MARZO</div>
<div style="position:absolute;left:259.25px;top:678.5px;line-height:20px;height:20px;font-size:10.9px;color:#444;font-weight:normal;white-space:pre;">ABRIL</div>
<div style="position:absolute;left:318.2px;top:678.5px;line-height:20px;height:20px;font-size:11.8px;color:#444;font-weight:normal;white-space:pre;">MAYO</div>
<div style="position:absolute;left:381px;top:678.5px;line-height:20px;height:20px;font-size:11.7px;color:#444;font-weight:normal;white-space:pre;">JUNIO</div>
<div style="position:absolute;left:444px;top:678.5px;line-height:20px;height:20px;font-size:11.3px;color:#444;font-weight:normal;white-space:pre;">JULIO</div>
<div style="position:absolute;left:504px;top:678.5px;line-height:20px;height:20px;font-size:11.6px;color:#444;font-weight:normal;white-space:pre;">AGOSTO</div>
<div style="position:absolute;left:582px;top:678.5px;line-height:20px;height:20px;font-size:11.1px;color:#444;font-weight:normal;white-space:pre;">SEPTIEMBRE</div>
<div style="position:absolute;left:682.5px;top:678.5px;line-height:20px;height:20px;font-size:10.95px;color:#444;font-weight:normal;white-space:pre;">OCTUBRE</div>
<div style="position:absolute;left:762.5px;top:678.5px;line-height:20px;height:20px;font-size:11.5px;color:#444;font-weight:normal;white-space:pre;">NOVIEMBRE</div>
<div style="position:absolute;left:863px;top:678.5px;line-height:20px;height:20px;font-size:11.4px;color:#444;font-weight:normal;white-space:pre;">DICIEMBRE</div>
<div style="position:absolute;left:954px;top:678.5px;line-height:20px;height:20px;font-size:11.5px;color:#444;font-weight:normal;white-space:pre;">ROL GENERAL</div>
<div style="position:absolute;left:1051px;top:675px;width:106px;height:25px;background:#fff;border-left:1px solid #c6c6c6;border-right:1px solid #c6c6c6;"></div>
<div style="position:absolute;left:1051px;top:697px;width:106px;height:2px;background:#217346;"></div>
<div style="position:absolute;left:1062.5px;top:678.0px;line-height:20px;height:20px;font-size:12.3px;color:#217346;font-weight:bold;white-space:pre;">ANEXO REDP</div>
<svg style="position:absolute;left:1189px;top:680px;" width="17" height="17" viewBox="0 0 17 17"><circle cx="8.5" cy="8.5" r="7.5" fill="none" stroke="#777" stroke-width="1.3"/><path d="M8.5 4.5v8M4.5 8.5h8" stroke="#777" stroke-width="2"/></svg>
<svg style="position:absolute;left:1265px;top:683px;" width="3" height="13" viewBox="0 0 3 13"><rect x="0.5" y="0" width="2" height="2" fill="#aaa"/><rect x="0.5" y="5" width="2" height="2" fill="#aaa"/><rect x="0.5" y="10" width="2" height="2" fill="#aaa"/></svg>
<div style="position:absolute;left:1283px;top:682px;width:15px;height:15px;border:1px solid #b4b4b4;background:#fff;"></div>
<div style="position:absolute;left:1297px;top:682px;width:26px;height:15px;border:1px solid #b4b4b4;border-left-width:2px;background:#fff;"></div>
<div style="position:absolute;left:1325px;top:682px;width:15px;height:15px;border:1px solid #b4b4b4;background:#fff;"></div>
<svg style="position:absolute;left:1288px;top:686px;" width="4" height="7" viewBox="0 0 4 7"><path d="M4 0v7L0 3.5z" fill="#666"/></svg>
<svg style="position:absolute;left:1331px;top:686px;" width="4" height="7" viewBox="0 0 4 7"><path d="M0 0v7l4-3.5z" fill="#666"/></svg>
<div style="position:absolute;left:0px;top:703px;width:1361px;height:23px;background:#217346;"></div>
<div style="position:absolute;left:0px;top:725px;width:1361px;height:2px;background:#6b5f2a;"></div>
<div style="position:absolute;left:2.5px;top:704.5px;line-height:20px;height:20px;font-size:10.3px;color:#fff;font-weight:normal;white-space:pre;">LISTO</div>
<div style="position:absolute;left:1072px;top:704px;width:38px;height:21px;background:#185c37;"></div>
<svg style="position:absolute;left:1084px;top:707px;" width="14" height="14" viewBox="0 0 14 14"><g fill="none" stroke="#fff"><rect x="0.5" y="0.5" width="13" height="13"/><path d="M0.5 5h13M0.5 9h13M5 0.5v13M9 0.5v13"/></g></svg>
<svg style="position:absolute;left:1121px;top:707px;" width="15" height="14" viewBox="0 0 15 14"><g fill="none" stroke="#fff"><rect x="0.5" y="0.5" width="14" height="13"/><rect x="3.5" y="3" width="8" height="8"/><path d="M5 5.5h5M5 7.5h5"/></g></svg>
<svg style="position:absolute;left:1160px;top:707px;" width="14" height="14" viewBox="0 0 14 14"><g fill="none" stroke="#fff"><path d="M0.5 0.5h13v13h-13z"/></g><rect x="3" y="1" width="3" height="7" fill="#fff"/><rect x="8" y="1" width="3" height="5" fill="#fff"/><path d="M0.5 8.5h6" stroke="#fff"/></svg>
<div style="position:absolute;left:1191px;top:713px;width:7px;height:2px;background:#fff;"></div>
<div style="position:absolute;left:1201px;top:714px;width:100px;height:1px;background:#fff;"></div>
<div style="position:absolute;left:1248px;top:708px;width:4px;height:12px;background:#fff;"></div>
<svg style="position:absolute;left:1305px;top:709px;" width="9" height="9" viewBox="0 0 9 9"><path d="M4.5 0v9M0 4.5h9" stroke="#fff" stroke-width="2"/></svg>
<div style="position:absolute;left:1327px;top:704.0px;line-height:20px;height:20px;font-size:11.2px;color:#fff;font-weight:normal;white-space:pre;">98 %</div>
</body></html>
